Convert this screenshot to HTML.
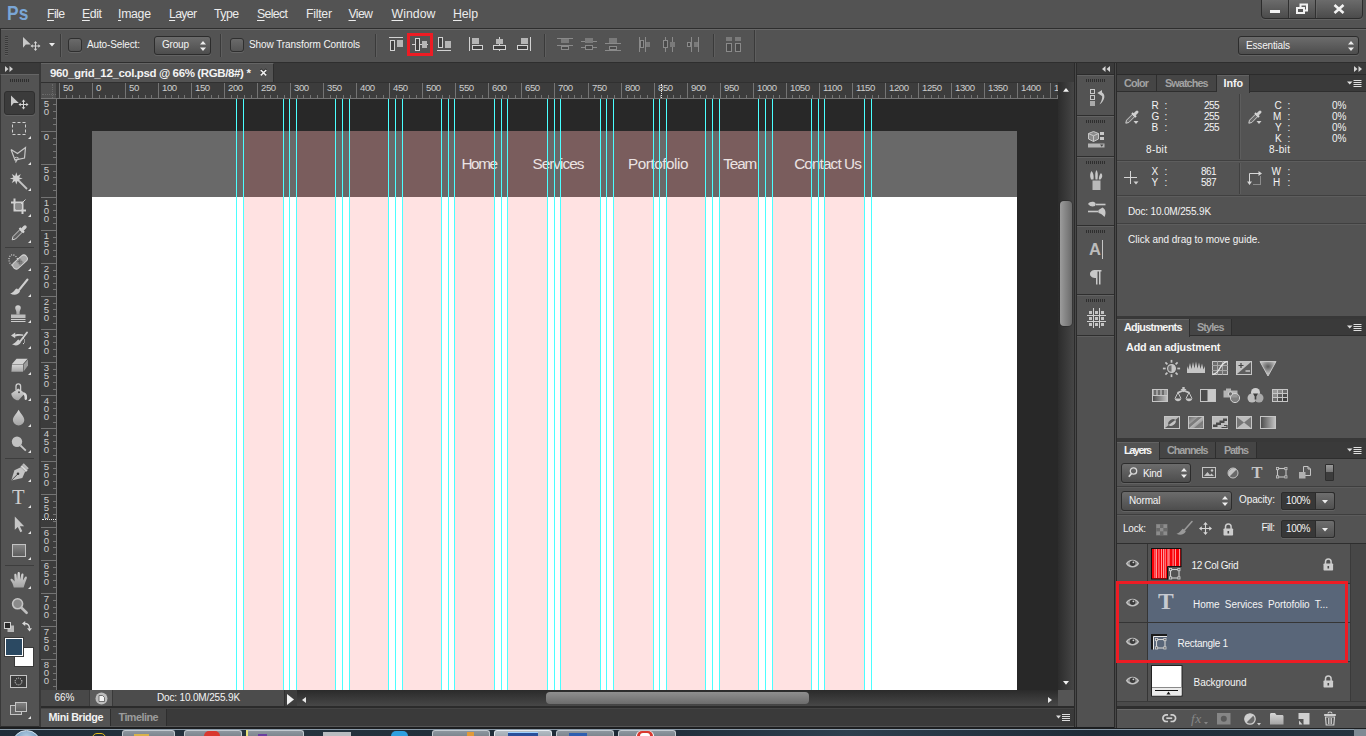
<!DOCTYPE html>
<html lang="en"><head><meta charset="utf-8"><title>960_grid_12_col.psd @ 66% (RGB/8#) *</title>
<style>
*{box-sizing:border-box;margin:0;padding:0}
html,body{width:1366px;height:736px;overflow:hidden;background:#535353}
body{position:relative;font-family:"Liberation Sans",sans-serif;font-size:11px;color:#e6e6e6;-webkit-font-smoothing:antialiased}
.a{position:absolute}
.t{position:absolute;white-space:nowrap;line-height:14px}
svg{position:absolute;overflow:visible}
u{text-decoration:underline;text-underline-offset:2px;text-decoration-thickness:1px}
/* frames */
#menubar{left:0;top:0;width:1366px;height:28px;background:#535353}
#menubar .t{font-size:13px;top:7px;color:#ececec;letter-spacing:.1px}
#optbar{left:0;top:28px;width:1366px;height:35px;background:#535353;border-top:1px solid #2e2e2e;border-bottom:1px solid #2e2e2e;border-left:1px solid #2e2e2e;box-shadow:inset 0 1px 0 #686868}
#tabrow{left:41px;top:63px;width:1034px;height:19px;background:#3a3a3a}
#tab{left:41px;top:63px;width:233px;height:19px;background:#535353;border-right:1px solid #2e2e2e;border-top:1px solid #656565}
#toolhead{left:0;top:63px;width:39px;height:11px;background:#3a3a3a}
#toolbar{left:0;top:74px;width:39px;height:653px;background:#535353;border-top:1px solid #656565;border-left:1px solid #383838;border-bottom:1px solid #2e2e2e}
#gapL{left:39px;top:63px;width:2px;height:664px;background:#383838}
#pasteboard{left:57px;top:99px;width:1001px;height:591px;background:#282828;overflow:hidden}
#hruler{left:41px;top:82px;width:1017px;height:17px;background:#3c3c3c;overflow:hidden;border-top:1px solid #303030}
#vruler{left:41px;top:99px;width:16px;height:591px;background:#3c3c3c;overflow:hidden}
#corner{left:41px;top:83px;width:15px;height:15px;background:#505050}
.rt{position:absolute;font-size:9.6px;color:#cdcdcd;line-height:9.6px;white-space:nowrap;letter-spacing:-.42px}
.g{position:absolute;top:0;width:1px;height:591px;background:#4affff}
.col{position:absolute;top:32px;height:559px;background:rgba(255,0,0,.113)}
</style></head><body>
<div class="a" id="menubar">
<span class="t" style="left:7.0px;top:3.7px;font-size:19.8px;line-height:1;color:#7aa6d6;font-weight:bold;transform:scaleX(.88);transform-origin:0 0;">Ps</span>
<span class="t" style="left:47.0px;top:7.6px;font-size:12.3px;line-height:1;letter-spacing:-0.61px;color:#ececec;"><u>F</u>ile</span>
<span class="t" style="left:82.0px;top:7.6px;font-size:12.3px;line-height:1;letter-spacing:-0.40px;color:#ececec;"><u>E</u>dit</span>
<span class="t" style="left:118.0px;top:7.6px;font-size:12.3px;line-height:1;letter-spacing:-0.30px;color:#ececec;"><u>I</u>mage</span>
<span class="t" style="left:169.0px;top:7.6px;font-size:12.3px;line-height:1;letter-spacing:-0.69px;color:#ececec;"><u>L</u>ayer</span>
<span class="t" style="left:214.0px;top:7.6px;font-size:12.3px;line-height:1;letter-spacing:-0.56px;color:#ececec;">T<u>y</u>pe</span>
<span class="t" style="left:257.0px;top:7.6px;font-size:12.3px;line-height:1;letter-spacing:-0.64px;color:#ececec;"><u>S</u>elect</span>
<span class="t" style="left:306.0px;top:7.6px;font-size:12.3px;line-height:1;letter-spacing:-0.27px;color:#ececec;">Fil<u>t</u>er</span>
<span class="t" style="left:348.5px;top:7.6px;font-size:12.3px;line-height:1;letter-spacing:-0.65px;color:#ececec;"><u>V</u>iew</span>
<span class="t" style="left:391.5px;top:7.6px;font-size:12.3px;line-height:1;letter-spacing:0.05px;color:#ececec;"><u>W</u>indow</span>
<span class="t" style="left:453.0px;top:7.6px;font-size:12.3px;line-height:1;letter-spacing:-0.10px;color:#ececec;"><u>H</u>elp</span>
<div class="a" style="left:1261px;top:-1px;width:102px;height:20px;border:1px solid #2c2c2c;border-radius:0 0 4px 4px;background:linear-gradient(#6b6b6b,#4b4b4b);box-shadow:0 1px 0 #626262"></div>
<i class="a" style="left:1288px;top:0;width:1px;height:18px;background:#303030"></i><i class="a" style="left:1289px;top:0;width:1px;height:18px;background:#707070;opacity:.5"></i>
<i class="a" style="left:1315px;top:0;width:1px;height:18px;background:#303030"></i><i class="a" style="left:1316px;top:0;width:1px;height:18px;background:#707070;opacity:.5"></i>
<i class="a" style="left:1270px;top:10px;width:10px;height:3px;background:#f2f2f2"></i>
<svg style="left:1296px;top:3px" width="13" height="11"><path d="M4.5 4V1.5H11V7.5H8.5" fill="none" stroke="#f2f2f2" stroke-width="2"/><rect x="1" y="5" width="7" height="5" fill="none" stroke="#f2f2f2" stroke-width="2"/></svg>
<svg style="left:1333px;top:4px" width="12" height="10"><path d="M1.5 1L10.5 9M10.5 1L1.5 9" stroke="#f2f2f2" stroke-width="2.6" fill="none"/></svg>
</div>
<div class="a" id="optbar"></div>
<i class="a" style="left:5px;top:36px;width:3px;height:20px;background:repeating-linear-gradient(#3a3a3a 0 1px,#5c5c5c 1px 2px)"></i>
<svg style="left:22.800px;top:36.900px" width="20" height="18"><path d="M0 0L0 10.8L2.800 7.600H7.800Z" fill="#c9c9c9"/><path d="M12.500 5.500V12.500M9 9H16" stroke="#d4d4d4" stroke-width="1" fill="none"/><path d="M12.500 4L14.300 6.200H10.700ZM12.500 14L14.300 11.800H10.700ZM7.500 9L9.700 7.200V10.800ZM17.500 9L15.300 7.200V10.800Z" fill="#d4d4d4"/></svg>
<svg style="left:48.500px;top:43.300px" width="6" height="4"><path d="M0 0H6L3 3.600Z" fill="#ececec"/></svg>
<i class="a" style="left:60px;top:34px;width:1px;height:23px;background:#3a3a3a"></i><i class="a" style="left:61px;top:34px;width:1px;height:23px;background:#5e5e5e"></i>
<div class="a" style="left:68px;top:38px;width:14px;height:14px;border:1px solid #2f2f2f;border-radius:3px;background:linear-gradient(#6a6a6a,#555);box-shadow:0 1px 0 #666"></div>
<span class="t" style="left:87.0px;top:39.5px;font-size:10px;line-height:1;letter-spacing:-0.13px;color:#f4f4f4;">Auto-Select:</span>
<div class="a" style="left:154px;top:36px;width:57px;height:19px;border:1px solid #2c2c2c;border-radius:3px;background:linear-gradient(#6c6c6c,#4d4d4d);box-shadow:0 1px 0 #636363"></div><svg style="left:200px;top:41px" width="6" height="10"><path d="M0 3.5L3 0L6 3.5ZM0 6.5L3 10L6 6.5Z" fill="#ededed"/></svg>
<span class="t" style="left:162.0px;top:39.5px;font-size:10px;line-height:1;letter-spacing:-0.20px;color:#f4f4f4;">Group</span>
<i class="a" style="left:220px;top:34px;width:1px;height:23px;background:#3a3a3a"></i><i class="a" style="left:221px;top:34px;width:1px;height:23px;background:#5e5e5e"></i>
<div class="a" style="left:230px;top:38px;width:14px;height:14px;border:1px solid #2f2f2f;border-radius:3px;background:linear-gradient(#6a6a6a,#555);box-shadow:0 1px 0 #666"></div>
<span class="t" style="left:249.0px;top:39.5px;font-size:10px;line-height:1;letter-spacing:-0.08px;color:#f4f4f4;">Show Transform Controls</span>
<i class="a" style="left:375px;top:34px;width:1px;height:23px;background:#3a3a3a"></i><i class="a" style="left:376px;top:34px;width:1px;height:23px;background:#5e5e5e"></i>
<svg style="left:389px;top:37px" width="14" height="14"><rect x="0" y="0" width="14" height="1" fill="#d2d2d2"/><rect x="1.5" y="3.5" width="4" height="10" fill="#404040" stroke="#d2d2d2"/><rect x="8" y="3" width="6" height="7" fill="#b5b5b5"/></svg>
<div class="a" style="left:407px;top:33px;width:26px;height:23px;border:3px solid #ed1c24"></div>
<svg style="left:412px;top:38px" width="16" height="13"><rect x="0" y="6" width="16" height="1" fill="#d2d2d2"/><rect x="3.5" y="0.5" width="4" height="12" fill="#404040" stroke="#d2d2d2"/><rect x="10" y="3" width="5" height="7" fill="#b5b5b5"/></svg>
<svg style="left:437px;top:37px" width="14" height="14"><rect x="0" y="13" width="14" height="1" fill="#d2d2d2"/><rect x="1.5" y="0.5" width="4" height="10" fill="#404040" stroke="#d2d2d2"/><rect x="8" y="4" width="6" height="7" fill="#b5b5b5"/></svg>
<svg style="left:469px;top:37px" width="14" height="14"><rect x="0" y="0" width="1" height="14" fill="#d2d2d2"/><rect x="3.5" y="8.5" width="10" height="4" fill="#404040" stroke="#d2d2d2"/><rect x="3" y="1" width="7" height="6" fill="#b5b5b5"/></svg>
<svg style="left:493px;top:37px" width="13" height="14"><rect x="6" y="0" width="1" height="14" fill="#d2d2d2"/><rect x="0.5" y="8.5" width="12" height="4" fill="#404040" stroke="#d2d2d2"/><rect x="3" y="2" width="7" height="5" fill="#b5b5b5"/></svg>
<svg style="left:517px;top:37px" width="14" height="14"><rect x="13" y="0" width="1" height="14" fill="#d2d2d2"/><rect x="0.5" y="8.5" width="10" height="4" fill="#404040" stroke="#d2d2d2"/><rect x="4" y="1" width="7" height="6" fill="#b5b5b5"/></svg>
<i class="a" style="left:544px;top:34px;width:1px;height:23px;background:#3a3a3a"></i><i class="a" style="left:545px;top:34px;width:1px;height:23px;background:#5e5e5e"></i>
<svg style="left:557px;top:38px" width="16" height="13"><rect x="0" y="0" width="16" height="1" fill="#8a8a8a"/><rect x="4" y="1" width="8" height="4" fill="#7a7a7a"/><rect x="0" y="7" width="16" height="1" fill="#8a8a8a"/><rect x="4.5" y="8.5" width="7" height="3" fill="#494949" stroke="#8a8a8a"/></svg>
<svg style="left:581px;top:38px" width="16" height="13"><rect x="0" y="3" width="16" height="1" fill="#8a8a8a"/><rect x="4" y="0" width="8" height="5" fill="#7a7a7a"/><rect x="0" y="9" width="16" height="1" fill="#8a8a8a"/><rect x="4.5" y="7.5" width="7" height="4" fill="#494949" stroke="#8a8a8a"/></svg>
<svg style="left:605px;top:38px" width="16" height="13"><rect x="0" y="5" width="16" height="1" fill="#8a8a8a"/><rect x="4" y="0" width="8" height="5" fill="#7a7a7a"/><rect x="0" y="12" width="16" height="1" fill="#8a8a8a"/><rect x="4.5" y="8.5" width="7" height="3" fill="#494949" stroke="#8a8a8a"/></svg>
<svg style="left:639px;top:37px" width="12" height="15"><rect x="0" y="0" width="1" height="15" fill="#8a8a8a"/><rect x="1.5" y="3.5" width="3" height="7" fill="#494949" stroke="#8a8a8a"/><rect x="6" y="0" width="1" height="15" fill="#8a8a8a"/><rect x="7" y="5" width="4" height="5" fill="#7a7a7a"/></svg>
<svg style="left:663px;top:37px" width="12" height="15"><rect x="2" y="0" width="1" height="15" fill="#8a8a8a"/><rect x="0.5" y="3.5" width="4" height="7" fill="#494949" stroke="#8a8a8a"/><rect x="9" y="0" width="1" height="15" fill="#8a8a8a"/><rect x="7" y="5" width="5" height="5" fill="#7a7a7a"/></svg>
<svg style="left:687px;top:37px" width="12" height="15"><rect x="4" y="0" width="1" height="15" fill="#8a8a8a"/><rect x="0.5" y="5.5" width="3" height="4" fill="#494949" stroke="#8a8a8a"/><rect x="11" y="0" width="1" height="15" fill="#8a8a8a"/><rect x="7" y="5" width="4" height="5" fill="#7a7a7a"/></svg>
<i class="a" style="left:713px;top:34px;width:1px;height:23px;background:#3a3a3a"></i><i class="a" style="left:714px;top:34px;width:1px;height:23px;background:#5e5e5e"></i>
<svg style="left:726px;top:37px" width="15" height="15"><rect x="0" y="0" width="6" height="4" fill="#7a7a7a"/><rect x="9" y="0" width="6" height="4" fill="#7a7a7a"/><rect x="0.5" y="6.5" width="5" height="8" fill="#494949" stroke="#8a8a8a"/><rect x="9.5" y="6.5" width="5" height="8" fill="#494949" stroke="#8a8a8a"/></svg>
<i class="a" style="left:754px;top:30px;width:1px;height:32px;background:#3a3a3a"></i><i class="a" style="left:755px;top:30px;width:1px;height:32px;background:#5e5e5e"></i>
<div class="a" style="left:1238px;top:36px;width:121px;height:19px;border:1px solid #2c2c2c;border-radius:3px;background:linear-gradient(#6c6c6c,#4d4d4d);box-shadow:0 1px 0 #636363"></div><svg style="left:1348px;top:41px" width="6" height="10"><path d="M0 3.5L3 0L6 3.5ZM0 6.5L3 10L6 6.5Z" fill="#ededed"/></svg>
<span class="t" style="left:1246.0px;top:40.5px;font-size:10px;line-height:1;letter-spacing:-0.18px;color:#f4f4f4;">Essentials</span>
<div class="a" id="toolhead"></div>
<svg style="left:5px;top:65.500px" width="9" height="6"><path d="M0 0L3.5 3L0 6ZM4.5 0L8 3L4.5 6Z" fill="#cfcfcf"/></svg>
<div class="a" id="toolbar"></div><div class="a" id="gapL"></div>
<i class="a" style="left:10px;top:79px;width:20px;height:3px;background:repeating-linear-gradient(90deg,#2e2e2e 0 1px,transparent 1px 2px)"></i>
<div class="a" style="left:4px;top:91px;width:31px;height:24px;border:1px solid #2f2f2f;border-radius:3px;background:#3b3b3b;box-shadow:0 1px 0 #626262"></div>
<svg style="left:0;top:0" width="40" height="736">
<defs><linearGradient id="gv" x1="0" y1="0" x2="0" y2="1"><stop offset="0" stop-color="#d6d6d6"/><stop offset="1" stop-color="#a4a4a4"/></linearGradient><linearGradient id="gr" x1="0" y1="0" x2="0" y2="1"><stop offset="0" stop-color="#858585"/><stop offset="1" stop-color="#5c5c5c"/></linearGradient></defs>
<g transform="translate(11,95.5)"><path d="M0 0L0 10.8L2.8 7.6H7.8Z" fill="#c9c9c9"/><path d="M12.5 5.5V12.5M9 9H16" stroke="#d4d4d4" stroke-width="1" fill="none"/><path d="M12.5 4L14.3 6.2H10.7ZM12.5 14L14.3 11.8H10.7ZM7.5 9L9.7 7.2V10.8ZM17.5 9L15.3 7.2V10.8Z" fill="#d4d4d4"/></g>
<rect x="12.5" y="122.5" width="13" height="12" fill="none" stroke="#d0d0d0" stroke-width="1" stroke-dasharray="3 2"/><path d="M28 139H31V136Z" fill="#e4e4e4"/>
<path d="M11 149.5L17.5 153.5L25.5 147.5L24.5 158L15 160L11 149.5M17.5 158.5L15.5 162.5" fill="none" stroke="#c8c8c8" stroke-width="1.2"/><ellipse cx="16.6" cy="158.6" rx="2.1" ry="1.3" fill="none" stroke="#c8c8c8" stroke-width=".9"/><path d="M28 165H31V162Z" fill="#e4e4e4"/>
<path d="M16.3 172.3L17.5 176L20.8 174L19.2 177.4L22.8 178.4L19.2 179.6L20.8 183L17.5 181L16.3 184.6L15.1 181L11.8 183L13.4 179.6L9.8 178.4L13.4 177.4L11.8 174L15.1 176Z" fill="#d2d2d2"/><path d="M19 181L27 189" stroke="#c4c4c4" stroke-width="1.8"/><path d="M28 191H31V188Z" fill="#e4e4e4"/>
<path d="M14.5 198.5V210.5H26M11 202.5H22.5V214" fill="none" stroke="#d0d0d0" stroke-width="2"/><path d="M15.5 209.5L25.5 199.5" stroke="#d0d0d0" stroke-width="1"/><rect x="16" y="204" width="5" height="5" fill="#8a8a8a"/><path d="M28 217H31V214Z" fill="#e4e4e4"/>
<path d="M12.2 239.8L13 236.5L20 229.5L22.5 232L15.5 239Z" fill="#606060" stroke="#d0d0d0" stroke-width="1"/><path d="M19.5 228L24 232.5" stroke="#d8d8d8" stroke-width="2.2"/><path d="M22 230L25 227" stroke="#cfcfcf" stroke-width="3.4" stroke-linecap="round"/><path d="M28 243H31V240Z" fill="#e4e4e4"/>
<path d="M5 247.5H34" stroke="#3d3d3d" stroke-width="1"/>
<ellipse cx="13.5" cy="260.5" rx="4.3" ry="5.8" fill="none" stroke="#e0e0e0" stroke-width="1.2" stroke-dasharray="1 1.3" transform="rotate(-20 13.5 260.5)"/><g transform="rotate(-42 20 262)"><rect x="11.5" y="258.5" width="17" height="7" rx="3.3" fill="#a8a8a8" stroke="#d4d4d4" stroke-width="1"/><rect x="17.5" y="259" width="5" height="6" fill="#8c8c8c"/><path d="M18.5 260.5h1M20.5 260.5h1M18.5 262.5h1M20.5 262.5h1M19.5 261.5h1M19.5 263.5h1" stroke="#5a5a5a" stroke-width="1"/></g><path d="M28 271H31V268Z" fill="#e4e4e4"/>
<path d="M27.5 279.5L19 290" stroke="#cfcfcf" stroke-width="2" stroke-linecap="round"/><path d="M17 288.5C14.5 289 14.5 292.5 10.2 293.4C13.5 295.6 18.6 295 20 291.2Z" fill="#cfcfcf"/><path d="M28 297H31V294Z" fill="#e4e4e4"/>
<path d="M18 305.2a2.8 2.8 0 0 1 2.8 2.8c0 1.6-1.2 2.4-1.2 4.2v2.3h-3.2v-2.3c0-1.8-1.2-2.6-1.2-4.2a2.8 2.8 0 0 1 2.8-2.8Z" fill="url(#gv)"/><rect x="11" y="314.5" width="14.5" height="3.6" fill="#bdbdbd"/><path d="M11 319.5H25.5M11 321.5H25.5" stroke="#cdcdcd" stroke-width="1"/><path d="M28 323H31V320Z" fill="#e4e4e4"/>
<path d="M27 332.5L20.5 341" stroke="#cfcfcf" stroke-width="1.9" stroke-linecap="round"/><path d="M18.6 339.5C16.6 340 16.4 343 12 344.3C15 346.2 19.6 345.8 21 342Z" fill="#cfcfcf"/><path d="M11 335.5L15.2 332.6V334.4C18.5 333.8 21.5 334 23.5 334.6L22.6 336.1C20.5 335.7 18 335.7 15.2 336.4V338.3Z" fill="#cfcfcf"/><path d="M23 338l1 0m0 2l1 0m-1 2l1 0m-2 1.600l1 0" stroke="#e6e6e6" stroke-width="1"/><path d="M28 349H31V346Z" fill="#e4e4e4"/>
<path d="M16.5 358.8H27.6L23 364H12Z" fill="#d2d2d2"/><path d="M12 364.6H23V371.8H11.4Z" fill="url(#gv)"/><path d="M23.6 364.4L28 359.4V365.6L23.6 371.6Z" fill="#9c9c9c"/><path d="M28 375H31V372Z" fill="#e4e4e4"/>
<path d="M11.3 393.5L18.2 388.4L25 393.2L18.5 400.2C16.5 401 11.5 398.200 11.3 393.5Z" fill="url(#gv)"/><path d="M16 390V386.200a2.300 2.300 0 0 1 4.600 0V391.500" fill="none" stroke="#d0d0d0" stroke-width="1.3"/><path d="M24 392.600C26.500 393.200 27.400 395 27 399C26.500 400.300 24.800 400.300 24.600 399C24.600 397 24.600 395 23 394Z" fill="#d8d8d8"/><circle cx="19" cy="392.300" r="1" fill="#555"/><path d="M28 401H31V398Z" fill="#e4e4e4"/>
<path d="M18.600 409.800C20.500 413.500 24.300 416.500 24.300 420A5.700 5.400 0 0 1 12.900 420C12.900 416.500 16.700 413.500 18.600 409.800Z" fill="url(#gv)"/><path d="M28 427H31V424Z" fill="#e4e4e4"/>
<circle cx="17" cy="441.800" r="5.200" fill="#c2c2c2"/><path d="M20.500 445.500L25.800 450.600" stroke="#c8c8c8" stroke-width="1.800"/><path d="M28 453H31V450Z" fill="#e4e4e4"/>
<path d="M5 458.5H34" stroke="#3d3d3d" stroke-width="1"/>
<path d="M11.300 480.500L14.400 470.300L20.800 467.200L25.200 471.600L22.300 478Z" fill="#c4c4c4"/><path d="M11.300 480.500L17.600 474.200" stroke="#4a4a4a" stroke-width="1"/><circle cx="18" cy="473.800" r="1.300" fill="#3a3a3a"/><path d="M21.300 465.800L26.800 471.200" stroke="#d6d6d6" stroke-width="2.400"/><path d="M23 464L28 469" stroke="#bdbdbd" stroke-width="2.200"/><path d="M28 482H31V479Z" fill="#e4e4e4"/>
<path d="M28 508H31V505Z" fill="#e4e4e4"/>
<path d="M14.800 516.600V529.800L17.800 527L20.300 532.300L22.300 531.300L19.900 526.200H24.200Z" fill="#c6c6c6"/><path d="M28 534H31V531Z" fill="#e4e4e4"/>
<rect x="12.500" y="544.500" width="13" height="12" fill="url(#gr)" stroke="#c2c2c2" stroke-width="1"/><path d="M28 560H31V557Z" fill="#e4e4e4"/>
<path d="M5 565.5H34" stroke="#3d3d3d" stroke-width="1"/>
<path d="M13.800 587.600C13 584 12 582 10.600 580.200C10.200 578.800 11.800 578.300 12.900 579.500L14.600 581.500L14.300 574.800C14.300 573.300 16.300 573.300 16.500 574.800L17.100 579.500L17.600 573.200C17.700 571.700 19.800 571.700 19.900 573.200L20.100 579.600L21.300 574.400C21.600 573 23.600 573.300 23.500 574.800L22.900 580.600L24.800 577.200C25.500 576 27.300 576.700 26.800 578.200C25.800 581.500 24.500 584 23.600 587.600Z" fill="url(#gv)"/><path d="M28 589H31V586Z" fill="#e4e4e4"/>
<circle cx="17.600" cy="603.800" r="5" fill="#8b8b8b" stroke="#c6c6c6" stroke-width="1.600"/><path d="M21.500 607.800L26.600 612.800" stroke="#c0c0c0" stroke-width="2.600" stroke-linecap="round"/>
<rect x="7.500" y="625.500" width="6.500" height="6.500" fill="#b8b8b8"/><rect x="4.500" y="622.500" width="6" height="6" fill="#2a2a2a" stroke="#d0d0d0" stroke-width="1"/>
<path d="M24.500 623.500C28 623.500 29.500 625 29.500 628.500" fill="none" stroke="#d8d8d8" stroke-width="1.300"/><path d="M22 623.500L25.200 621V626ZM29.500 631.500L27 628.200H32Z" fill="#d8d8d8"/>
<rect x="14.500" y="647.500" width="19" height="19" fill="#fff" stroke="#3a3a3a"/>
<rect x="4.500" y="637.500" width="19" height="19" fill="#fff" stroke="#3a3a3a"/><rect x="6" y="639" width="16" height="16" fill="#2b4962"/>
<rect x="10.500" y="675.500" width="16" height="12" fill="#3c3c3c" stroke="#c4c4c4"/><circle cx="18.500" cy="681.500" r="3.400" fill="none" stroke="#f0f0f0" stroke-width="1" stroke-dasharray="1 1.140"/>
<rect x="10.500" y="705.500" width="11" height="9" fill="#666" stroke="#c4c4c4"/><rect x="15.500" y="702.500" width="11" height="9" fill="url(#gr)" stroke="#c4c4c4"/><path d="M28 719H31V716Z" fill="#e4e4e4"/>
</svg>
<span class="t" style="left:12px;top:487px;font-family:'Liberation Serif',serif;font-size:21px;line-height:21px;color:#cecece;transform:scaleX(.98);transform-origin:0 0">T</span>
<div class="a" id="tabrow"></div><div class="a" id="tab"><span class="t" style="left:9.0px;top:3.9px;font-size:11.5px;line-height:1;letter-spacing:-0.37px;color:#f2f2f2;font-weight:bold;">960_grid_12_col.psd @ 66% (RGB/8#) *</span><svg style="left:218.500px;top:4.500px" width="8" height="8"><path d="M.8 0L6.200 5.400M6.200 0L.8 5.400" stroke="#1e1e1e" stroke-width="1.500" fill="none"/><path d="M.8 1L6.200 6.400M6.200 1L.8 6.400" stroke="#efefef" stroke-width="1.500" fill="none"/></svg></div>
<div class="a" id="pasteboard">
<div class="a" style="left:35px;top:32px;width:925px;height:559px;background:#fff"></div>
<div class="a" style="left:35px;top:32px;width:925px;height:66px;background:#696969"></div>
<div class="col" style="left:186px;width:40px"></div>
<div class="col" style="left:239px;width:39px"></div>
<div class="col" style="left:292px;width:39px"></div>
<div class="col" style="left:345px;width:39px"></div>
<div class="col" style="left:397px;width:40px"></div>
<div class="col" style="left:450px;width:40px"></div>
<div class="col" style="left:503px;width:40px"></div>
<div class="col" style="left:556px;width:40px"></div>
<div class="col" style="left:609px;width:39px"></div>
<div class="col" style="left:662px;width:39px"></div>
<div class="col" style="left:715px;width:39px"></div>
<div class="col" style="left:767px;width:40px"></div>
<span class="t" style="left:404.5px;top:56.9px;font-size:15.3px;line-height:1;letter-spacing:-1.44px;color:#ebe3e3;">Home</span>
<span class="t" style="left:475.4px;top:56.9px;font-size:15.3px;line-height:1;letter-spacing:-0.95px;color:#ebe3e3;">Services</span>
<span class="t" style="left:571.0px;top:56.9px;font-size:15.3px;line-height:1;letter-spacing:-0.47px;color:#ebe3e3;">Portofolio</span>
<span class="t" style="left:666.2px;top:56.9px;font-size:15.3px;line-height:1;letter-spacing:-1.10px;color:#ebe3e3;">Team</span>
<span class="t" style="left:737.2px;top:56.9px;font-size:15.3px;line-height:1;letter-spacing:-0.88px;color:#ebe3e3;">Contact Us</span>
<i class="g" style="left:179px"></i>
<i class="g" style="left:186px"></i>
<i class="g" style="left:226px"></i>
<i class="g" style="left:232px"></i>
<i class="g" style="left:239px"></i>
<i class="g" style="left:278px"></i>
<i class="g" style="left:285px"></i>
<i class="g" style="left:292px"></i>
<i class="g" style="left:331px"></i>
<i class="g" style="left:338px"></i>
<i class="g" style="left:345px"></i>
<i class="g" style="left:384px"></i>
<i class="g" style="left:391px"></i>
<i class="g" style="left:397px"></i>
<i class="g" style="left:437px"></i>
<i class="g" style="left:444px"></i>
<i class="g" style="left:450px"></i>
<i class="g" style="left:490px"></i>
<i class="g" style="left:497px"></i>
<i class="g" style="left:503px"></i>
<i class="g" style="left:543px"></i>
<i class="g" style="left:549px"></i>
<i class="g" style="left:556px"></i>
<i class="g" style="left:596px"></i>
<i class="g" style="left:602px"></i>
<i class="g" style="left:609px"></i>
<i class="g" style="left:648px"></i>
<i class="g" style="left:655px"></i>
<i class="g" style="left:662px"></i>
<i class="g" style="left:701px"></i>
<i class="g" style="left:708px"></i>
<i class="g" style="left:715px"></i>
<i class="g" style="left:754px"></i>
<i class="g" style="left:761px"></i>
<i class="g" style="left:767px"></i>
<i class="g" style="left:807px"></i>
<i class="g" style="left:814px"></i>
</div>
<div class="a" id="hruler">
<span class="rt" style="left:22px;top:-.1px">50</span>
<span class="rt" style="left:55px;top:-.1px">0</span>
<span class="rt" style="left:88px;top:-.1px">50</span>
<span class="rt" style="left:121px;top:-.1px">100</span>
<span class="rt" style="left:154px;top:-.1px">150</span>
<span class="rt" style="left:187px;top:-.1px">200</span>
<span class="rt" style="left:220px;top:-.1px">250</span>
<span class="rt" style="left:253px;top:-.1px">300</span>
<span class="rt" style="left:286px;top:-.1px">350</span>
<span class="rt" style="left:319px;top:-.1px">400</span>
<span class="rt" style="left:352px;top:-.1px">450</span>
<span class="rt" style="left:385px;top:-.1px">500</span>
<span class="rt" style="left:418px;top:-.1px">550</span>
<span class="rt" style="left:451px;top:-.1px">600</span>
<span class="rt" style="left:484px;top:-.1px">650</span>
<span class="rt" style="left:517px;top:-.1px">700</span>
<span class="rt" style="left:551px;top:-.1px">750</span>
<span class="rt" style="left:584px;top:-.1px">800</span>
<span class="rt" style="left:617px;top:-.1px">850</span>
<span class="rt" style="left:650px;top:-.1px">900</span>
<span class="rt" style="left:683px;top:-.1px">950</span>
<span class="rt" style="left:716px;top:-.1px">1000</span>
<span class="rt" style="left:749px;top:-.1px">1050</span>
<span class="rt" style="left:782px;top:-.1px">1100</span>
<span class="rt" style="left:815px;top:-.1px">1150</span>
<span class="rt" style="left:848px;top:-.1px">1200</span>
<span class="rt" style="left:881px;top:-.1px">1250</span>
<span class="rt" style="left:914px;top:-.1px">1300</span>
<span class="rt" style="left:947px;top:-.1px">1350</span>
<span class="rt" style="left:980px;top:-.1px">1400</span>
<span class="rt" style="left:1013px;top:-.1px">1450</span>
<i class="a" style="left:18px;top:0;width:1px;height:15px;background:#747474"></i>
<i class="a" style="left:25px;top:12px;width:1px;height:3px;background:#747474"></i>
<i class="a" style="left:31px;top:12px;width:1px;height:3px;background:#747474"></i>
<i class="a" style="left:38px;top:12px;width:1px;height:3px;background:#747474"></i>
<i class="a" style="left:44px;top:12px;width:1px;height:3px;background:#747474"></i>
<i class="a" style="left:51px;top:0;width:1px;height:15px;background:#747474"></i>
<i class="a" style="left:58px;top:12px;width:1px;height:3px;background:#747474"></i>
<i class="a" style="left:64px;top:12px;width:1px;height:3px;background:#747474"></i>
<i class="a" style="left:71px;top:12px;width:1px;height:3px;background:#747474"></i>
<i class="a" style="left:77px;top:12px;width:1px;height:3px;background:#747474"></i>
<i class="a" style="left:84px;top:0;width:1px;height:15px;background:#747474"></i>
<i class="a" style="left:91px;top:12px;width:1px;height:3px;background:#747474"></i>
<i class="a" style="left:97px;top:12px;width:1px;height:3px;background:#747474"></i>
<i class="a" style="left:104px;top:12px;width:1px;height:3px;background:#747474"></i>
<i class="a" style="left:110px;top:12px;width:1px;height:3px;background:#747474"></i>
<i class="a" style="left:117px;top:0;width:1px;height:15px;background:#747474"></i>
<i class="a" style="left:124px;top:12px;width:1px;height:3px;background:#747474"></i>
<i class="a" style="left:130px;top:12px;width:1px;height:3px;background:#747474"></i>
<i class="a" style="left:137px;top:12px;width:1px;height:3px;background:#747474"></i>
<i class="a" style="left:143px;top:12px;width:1px;height:3px;background:#747474"></i>
<i class="a" style="left:150px;top:0;width:1px;height:15px;background:#747474"></i>
<i class="a" style="left:157px;top:12px;width:1px;height:3px;background:#747474"></i>
<i class="a" style="left:163px;top:12px;width:1px;height:3px;background:#747474"></i>
<i class="a" style="left:170px;top:12px;width:1px;height:3px;background:#747474"></i>
<i class="a" style="left:177px;top:12px;width:1px;height:3px;background:#747474"></i>
<i class="a" style="left:183px;top:0;width:1px;height:15px;background:#747474"></i>
<i class="a" style="left:190px;top:12px;width:1px;height:3px;background:#747474"></i>
<i class="a" style="left:196px;top:12px;width:1px;height:3px;background:#747474"></i>
<i class="a" style="left:203px;top:12px;width:1px;height:3px;background:#747474"></i>
<i class="a" style="left:210px;top:12px;width:1px;height:3px;background:#747474"></i>
<i class="a" style="left:216px;top:0;width:1px;height:15px;background:#747474"></i>
<i class="a" style="left:223px;top:12px;width:1px;height:3px;background:#747474"></i>
<i class="a" style="left:229px;top:12px;width:1px;height:3px;background:#747474"></i>
<i class="a" style="left:236px;top:12px;width:1px;height:3px;background:#747474"></i>
<i class="a" style="left:243px;top:12px;width:1px;height:3px;background:#747474"></i>
<i class="a" style="left:249px;top:0;width:1px;height:15px;background:#747474"></i>
<i class="a" style="left:256px;top:12px;width:1px;height:3px;background:#747474"></i>
<i class="a" style="left:262px;top:12px;width:1px;height:3px;background:#747474"></i>
<i class="a" style="left:269px;top:12px;width:1px;height:3px;background:#747474"></i>
<i class="a" style="left:276px;top:12px;width:1px;height:3px;background:#747474"></i>
<i class="a" style="left:282px;top:0;width:1px;height:15px;background:#747474"></i>
<i class="a" style="left:289px;top:12px;width:1px;height:3px;background:#747474"></i>
<i class="a" style="left:295px;top:12px;width:1px;height:3px;background:#747474"></i>
<i class="a" style="left:302px;top:12px;width:1px;height:3px;background:#747474"></i>
<i class="a" style="left:309px;top:12px;width:1px;height:3px;background:#747474"></i>
<i class="a" style="left:315px;top:0;width:1px;height:15px;background:#747474"></i>
<i class="a" style="left:322px;top:12px;width:1px;height:3px;background:#747474"></i>
<i class="a" style="left:328px;top:12px;width:1px;height:3px;background:#747474"></i>
<i class="a" style="left:335px;top:12px;width:1px;height:3px;background:#747474"></i>
<i class="a" style="left:342px;top:12px;width:1px;height:3px;background:#747474"></i>
<i class="a" style="left:348px;top:0;width:1px;height:15px;background:#747474"></i>
<i class="a" style="left:355px;top:12px;width:1px;height:3px;background:#747474"></i>
<i class="a" style="left:362px;top:12px;width:1px;height:3px;background:#747474"></i>
<i class="a" style="left:368px;top:12px;width:1px;height:3px;background:#747474"></i>
<i class="a" style="left:375px;top:12px;width:1px;height:3px;background:#747474"></i>
<i class="a" style="left:381px;top:0;width:1px;height:15px;background:#747474"></i>
<i class="a" style="left:388px;top:12px;width:1px;height:3px;background:#747474"></i>
<i class="a" style="left:395px;top:12px;width:1px;height:3px;background:#747474"></i>
<i class="a" style="left:401px;top:12px;width:1px;height:3px;background:#747474"></i>
<i class="a" style="left:408px;top:12px;width:1px;height:3px;background:#747474"></i>
<i class="a" style="left:414px;top:0;width:1px;height:15px;background:#747474"></i>
<i class="a" style="left:421px;top:12px;width:1px;height:3px;background:#747474"></i>
<i class="a" style="left:428px;top:12px;width:1px;height:3px;background:#747474"></i>
<i class="a" style="left:434px;top:12px;width:1px;height:3px;background:#747474"></i>
<i class="a" style="left:441px;top:12px;width:1px;height:3px;background:#747474"></i>
<i class="a" style="left:447px;top:0;width:1px;height:15px;background:#747474"></i>
<i class="a" style="left:454px;top:12px;width:1px;height:3px;background:#747474"></i>
<i class="a" style="left:461px;top:12px;width:1px;height:3px;background:#747474"></i>
<i class="a" style="left:467px;top:12px;width:1px;height:3px;background:#747474"></i>
<i class="a" style="left:474px;top:12px;width:1px;height:3px;background:#747474"></i>
<i class="a" style="left:480px;top:0;width:1px;height:15px;background:#747474"></i>
<i class="a" style="left:487px;top:12px;width:1px;height:3px;background:#747474"></i>
<i class="a" style="left:494px;top:12px;width:1px;height:3px;background:#747474"></i>
<i class="a" style="left:500px;top:12px;width:1px;height:3px;background:#747474"></i>
<i class="a" style="left:507px;top:12px;width:1px;height:3px;background:#747474"></i>
<i class="a" style="left:513px;top:0;width:1px;height:15px;background:#747474"></i>
<i class="a" style="left:520px;top:12px;width:1px;height:3px;background:#747474"></i>
<i class="a" style="left:527px;top:12px;width:1px;height:3px;background:#747474"></i>
<i class="a" style="left:533px;top:12px;width:1px;height:3px;background:#747474"></i>
<i class="a" style="left:540px;top:12px;width:1px;height:3px;background:#747474"></i>
<i class="a" style="left:547px;top:0;width:1px;height:15px;background:#747474"></i>
<i class="a" style="left:553px;top:12px;width:1px;height:3px;background:#747474"></i>
<i class="a" style="left:560px;top:12px;width:1px;height:3px;background:#747474"></i>
<i class="a" style="left:566px;top:12px;width:1px;height:3px;background:#747474"></i>
<i class="a" style="left:573px;top:12px;width:1px;height:3px;background:#747474"></i>
<i class="a" style="left:580px;top:0;width:1px;height:15px;background:#747474"></i>
<i class="a" style="left:586px;top:12px;width:1px;height:3px;background:#747474"></i>
<i class="a" style="left:593px;top:12px;width:1px;height:3px;background:#747474"></i>
<i class="a" style="left:599px;top:12px;width:1px;height:3px;background:#747474"></i>
<i class="a" style="left:606px;top:12px;width:1px;height:3px;background:#747474"></i>
<i class="a" style="left:613px;top:0;width:1px;height:15px;background:#747474"></i>
<i class="a" style="left:619px;top:12px;width:1px;height:3px;background:#747474"></i>
<i class="a" style="left:626px;top:12px;width:1px;height:3px;background:#747474"></i>
<i class="a" style="left:632px;top:12px;width:1px;height:3px;background:#747474"></i>
<i class="a" style="left:639px;top:12px;width:1px;height:3px;background:#747474"></i>
<i class="a" style="left:646px;top:0;width:1px;height:15px;background:#747474"></i>
<i class="a" style="left:652px;top:12px;width:1px;height:3px;background:#747474"></i>
<i class="a" style="left:659px;top:12px;width:1px;height:3px;background:#747474"></i>
<i class="a" style="left:665px;top:12px;width:1px;height:3px;background:#747474"></i>
<i class="a" style="left:672px;top:12px;width:1px;height:3px;background:#747474"></i>
<i class="a" style="left:679px;top:0;width:1px;height:15px;background:#747474"></i>
<i class="a" style="left:685px;top:12px;width:1px;height:3px;background:#747474"></i>
<i class="a" style="left:692px;top:12px;width:1px;height:3px;background:#747474"></i>
<i class="a" style="left:698px;top:12px;width:1px;height:3px;background:#747474"></i>
<i class="a" style="left:705px;top:12px;width:1px;height:3px;background:#747474"></i>
<i class="a" style="left:712px;top:0;width:1px;height:15px;background:#747474"></i>
<i class="a" style="left:718px;top:12px;width:1px;height:3px;background:#747474"></i>
<i class="a" style="left:725px;top:12px;width:1px;height:3px;background:#747474"></i>
<i class="a" style="left:732px;top:12px;width:1px;height:3px;background:#747474"></i>
<i class="a" style="left:738px;top:12px;width:1px;height:3px;background:#747474"></i>
<i class="a" style="left:745px;top:0;width:1px;height:15px;background:#747474"></i>
<i class="a" style="left:751px;top:12px;width:1px;height:3px;background:#747474"></i>
<i class="a" style="left:758px;top:12px;width:1px;height:3px;background:#747474"></i>
<i class="a" style="left:765px;top:12px;width:1px;height:3px;background:#747474"></i>
<i class="a" style="left:771px;top:12px;width:1px;height:3px;background:#747474"></i>
<i class="a" style="left:778px;top:0;width:1px;height:15px;background:#747474"></i>
<i class="a" style="left:784px;top:12px;width:1px;height:3px;background:#747474"></i>
<i class="a" style="left:791px;top:12px;width:1px;height:3px;background:#747474"></i>
<i class="a" style="left:798px;top:12px;width:1px;height:3px;background:#747474"></i>
<i class="a" style="left:804px;top:12px;width:1px;height:3px;background:#747474"></i>
<i class="a" style="left:811px;top:0;width:1px;height:15px;background:#747474"></i>
<i class="a" style="left:817px;top:12px;width:1px;height:3px;background:#747474"></i>
<i class="a" style="left:824px;top:12px;width:1px;height:3px;background:#747474"></i>
<i class="a" style="left:831px;top:12px;width:1px;height:3px;background:#747474"></i>
<i class="a" style="left:837px;top:12px;width:1px;height:3px;background:#747474"></i>
<i class="a" style="left:844px;top:0;width:1px;height:15px;background:#747474"></i>
<i class="a" style="left:850px;top:12px;width:1px;height:3px;background:#747474"></i>
<i class="a" style="left:857px;top:12px;width:1px;height:3px;background:#747474"></i>
<i class="a" style="left:864px;top:12px;width:1px;height:3px;background:#747474"></i>
<i class="a" style="left:870px;top:12px;width:1px;height:3px;background:#747474"></i>
<i class="a" style="left:877px;top:0;width:1px;height:15px;background:#747474"></i>
<i class="a" style="left:883px;top:12px;width:1px;height:3px;background:#747474"></i>
<i class="a" style="left:890px;top:12px;width:1px;height:3px;background:#747474"></i>
<i class="a" style="left:897px;top:12px;width:1px;height:3px;background:#747474"></i>
<i class="a" style="left:903px;top:12px;width:1px;height:3px;background:#747474"></i>
<i class="a" style="left:910px;top:0;width:1px;height:15px;background:#747474"></i>
<i class="a" style="left:917px;top:12px;width:1px;height:3px;background:#747474"></i>
<i class="a" style="left:923px;top:12px;width:1px;height:3px;background:#747474"></i>
<i class="a" style="left:930px;top:12px;width:1px;height:3px;background:#747474"></i>
<i class="a" style="left:936px;top:12px;width:1px;height:3px;background:#747474"></i>
<i class="a" style="left:943px;top:0;width:1px;height:15px;background:#747474"></i>
<i class="a" style="left:950px;top:12px;width:1px;height:3px;background:#747474"></i>
<i class="a" style="left:956px;top:12px;width:1px;height:3px;background:#747474"></i>
<i class="a" style="left:963px;top:12px;width:1px;height:3px;background:#747474"></i>
<i class="a" style="left:969px;top:12px;width:1px;height:3px;background:#747474"></i>
<i class="a" style="left:976px;top:0;width:1px;height:15px;background:#747474"></i>
<i class="a" style="left:983px;top:12px;width:1px;height:3px;background:#747474"></i>
<i class="a" style="left:989px;top:12px;width:1px;height:3px;background:#747474"></i>
<i class="a" style="left:996px;top:12px;width:1px;height:3px;background:#747474"></i>
<i class="a" style="left:1002px;top:12px;width:1px;height:3px;background:#747474"></i>
<i class="a" style="left:1009px;top:0;width:1px;height:15px;background:#747474"></i>
<i class="a" style="left:1016px;top:12px;width:1px;height:3px;background:#747474"></i>
<i class="a" style="left:0;top:15px;width:1017px;height:1px;background:#747474"></i>
</div>
<div class="a" id="vruler">
<i class="a" style="left:0;top:-1px;width:16px;height:1px;background:#747474"></i>
<span class="rt" style="left:2px;top:-0.09999999999999998px;width:7px;letter-spacing:0;text-align:center">5</span>
<span class="rt" style="left:2px;top:7.9px;width:7px;letter-spacing:0;text-align:center">0</span>
<i class="a" style="left:12px;top:5px;width:3px;height:1px;background:#747474"></i>
<i class="a" style="left:12px;top:12px;width:3px;height:1px;background:#747474"></i>
<i class="a" style="left:12px;top:19px;width:3px;height:1px;background:#747474"></i>
<i class="a" style="left:12px;top:25px;width:3px;height:1px;background:#747474"></i>
<i class="a" style="left:0;top:32px;width:16px;height:1px;background:#747474"></i>
<span class="rt" style="left:2px;top:32.9px;width:7px;letter-spacing:0;text-align:center">0</span>
<i class="a" style="left:12px;top:39px;width:3px;height:1px;background:#747474"></i>
<i class="a" style="left:12px;top:45px;width:3px;height:1px;background:#747474"></i>
<i class="a" style="left:12px;top:52px;width:3px;height:1px;background:#747474"></i>
<i class="a" style="left:12px;top:58px;width:3px;height:1px;background:#747474"></i>
<i class="a" style="left:0;top:65px;width:16px;height:1px;background:#747474"></i>
<span class="rt" style="left:2px;top:65.9px;width:7px;letter-spacing:0;text-align:center">5</span>
<span class="rt" style="left:2px;top:73.9px;width:7px;letter-spacing:0;text-align:center">0</span>
<i class="a" style="left:12px;top:72px;width:3px;height:1px;background:#747474"></i>
<i class="a" style="left:12px;top:78px;width:3px;height:1px;background:#747474"></i>
<i class="a" style="left:12px;top:85px;width:3px;height:1px;background:#747474"></i>
<i class="a" style="left:12px;top:91px;width:3px;height:1px;background:#747474"></i>
<i class="a" style="left:0;top:98px;width:16px;height:1px;background:#747474"></i>
<span class="rt" style="left:2px;top:98.9px;width:7px;letter-spacing:0;text-align:center">1</span>
<span class="rt" style="left:2px;top:106.9px;width:7px;letter-spacing:0;text-align:center">0</span>
<span class="rt" style="left:2px;top:114.9px;width:7px;letter-spacing:0;text-align:center">0</span>
<i class="a" style="left:12px;top:105px;width:3px;height:1px;background:#747474"></i>
<i class="a" style="left:12px;top:111px;width:3px;height:1px;background:#747474"></i>
<i class="a" style="left:12px;top:118px;width:3px;height:1px;background:#747474"></i>
<i class="a" style="left:12px;top:124px;width:3px;height:1px;background:#747474"></i>
<i class="a" style="left:0;top:131px;width:16px;height:1px;background:#747474"></i>
<span class="rt" style="left:2px;top:131.9px;width:7px;letter-spacing:0;text-align:center">1</span>
<span class="rt" style="left:2px;top:139.9px;width:7px;letter-spacing:0;text-align:center">5</span>
<span class="rt" style="left:2px;top:147.9px;width:7px;letter-spacing:0;text-align:center">0</span>
<i class="a" style="left:12px;top:138px;width:3px;height:1px;background:#747474"></i>
<i class="a" style="left:12px;top:144px;width:3px;height:1px;background:#747474"></i>
<i class="a" style="left:12px;top:151px;width:3px;height:1px;background:#747474"></i>
<i class="a" style="left:12px;top:157px;width:3px;height:1px;background:#747474"></i>
<i class="a" style="left:0;top:164px;width:16px;height:1px;background:#747474"></i>
<span class="rt" style="left:2px;top:164.9px;width:7px;letter-spacing:0;text-align:center">2</span>
<span class="rt" style="left:2px;top:172.9px;width:7px;letter-spacing:0;text-align:center">0</span>
<span class="rt" style="left:2px;top:180.9px;width:7px;letter-spacing:0;text-align:center">0</span>
<i class="a" style="left:12px;top:171px;width:3px;height:1px;background:#747474"></i>
<i class="a" style="left:12px;top:177px;width:3px;height:1px;background:#747474"></i>
<i class="a" style="left:12px;top:184px;width:3px;height:1px;background:#747474"></i>
<i class="a" style="left:12px;top:190px;width:3px;height:1px;background:#747474"></i>
<i class="a" style="left:0;top:197px;width:16px;height:1px;background:#747474"></i>
<span class="rt" style="left:2px;top:197.9px;width:7px;letter-spacing:0;text-align:center">2</span>
<span class="rt" style="left:2px;top:205.9px;width:7px;letter-spacing:0;text-align:center">5</span>
<span class="rt" style="left:2px;top:213.9px;width:7px;letter-spacing:0;text-align:center">0</span>
<i class="a" style="left:12px;top:204px;width:3px;height:1px;background:#747474"></i>
<i class="a" style="left:12px;top:210px;width:3px;height:1px;background:#747474"></i>
<i class="a" style="left:12px;top:217px;width:3px;height:1px;background:#747474"></i>
<i class="a" style="left:12px;top:224px;width:3px;height:1px;background:#747474"></i>
<i class="a" style="left:0;top:230px;width:16px;height:1px;background:#747474"></i>
<span class="rt" style="left:2px;top:230.9px;width:7px;letter-spacing:0;text-align:center">3</span>
<span class="rt" style="left:2px;top:238.9px;width:7px;letter-spacing:0;text-align:center">0</span>
<span class="rt" style="left:2px;top:246.9px;width:7px;letter-spacing:0;text-align:center">0</span>
<i class="a" style="left:12px;top:237px;width:3px;height:1px;background:#747474"></i>
<i class="a" style="left:12px;top:243px;width:3px;height:1px;background:#747474"></i>
<i class="a" style="left:12px;top:250px;width:3px;height:1px;background:#747474"></i>
<i class="a" style="left:12px;top:257px;width:3px;height:1px;background:#747474"></i>
<i class="a" style="left:0;top:263px;width:16px;height:1px;background:#747474"></i>
<span class="rt" style="left:2px;top:263.9px;width:7px;letter-spacing:0;text-align:center">3</span>
<span class="rt" style="left:2px;top:271.9px;width:7px;letter-spacing:0;text-align:center">5</span>
<span class="rt" style="left:2px;top:279.9px;width:7px;letter-spacing:0;text-align:center">0</span>
<i class="a" style="left:12px;top:270px;width:3px;height:1px;background:#747474"></i>
<i class="a" style="left:12px;top:276px;width:3px;height:1px;background:#747474"></i>
<i class="a" style="left:12px;top:283px;width:3px;height:1px;background:#747474"></i>
<i class="a" style="left:12px;top:290px;width:3px;height:1px;background:#747474"></i>
<i class="a" style="left:0;top:296px;width:16px;height:1px;background:#747474"></i>
<span class="rt" style="left:2px;top:296.9px;width:7px;letter-spacing:0;text-align:center">4</span>
<span class="rt" style="left:2px;top:304.9px;width:7px;letter-spacing:0;text-align:center">0</span>
<span class="rt" style="left:2px;top:312.9px;width:7px;letter-spacing:0;text-align:center">0</span>
<i class="a" style="left:12px;top:303px;width:3px;height:1px;background:#747474"></i>
<i class="a" style="left:12px;top:309px;width:3px;height:1px;background:#747474"></i>
<i class="a" style="left:12px;top:316px;width:3px;height:1px;background:#747474"></i>
<i class="a" style="left:12px;top:323px;width:3px;height:1px;background:#747474"></i>
<i class="a" style="left:0;top:329px;width:16px;height:1px;background:#747474"></i>
<span class="rt" style="left:2px;top:329.9px;width:7px;letter-spacing:0;text-align:center">4</span>
<span class="rt" style="left:2px;top:337.9px;width:7px;letter-spacing:0;text-align:center">5</span>
<span class="rt" style="left:2px;top:345.9px;width:7px;letter-spacing:0;text-align:center">0</span>
<i class="a" style="left:12px;top:336px;width:3px;height:1px;background:#747474"></i>
<i class="a" style="left:12px;top:342px;width:3px;height:1px;background:#747474"></i>
<i class="a" style="left:12px;top:349px;width:3px;height:1px;background:#747474"></i>
<i class="a" style="left:12px;top:356px;width:3px;height:1px;background:#747474"></i>
<i class="a" style="left:0;top:362px;width:16px;height:1px;background:#747474"></i>
<span class="rt" style="left:2px;top:362.9px;width:7px;letter-spacing:0;text-align:center">5</span>
<span class="rt" style="left:2px;top:370.9px;width:7px;letter-spacing:0;text-align:center">0</span>
<span class="rt" style="left:2px;top:378.9px;width:7px;letter-spacing:0;text-align:center">0</span>
<i class="a" style="left:12px;top:369px;width:3px;height:1px;background:#747474"></i>
<i class="a" style="left:12px;top:375px;width:3px;height:1px;background:#747474"></i>
<i class="a" style="left:12px;top:382px;width:3px;height:1px;background:#747474"></i>
<i class="a" style="left:12px;top:389px;width:3px;height:1px;background:#747474"></i>
<i class="a" style="left:0;top:395px;width:16px;height:1px;background:#747474"></i>
<span class="rt" style="left:2px;top:395.9px;width:7px;letter-spacing:0;text-align:center">5</span>
<span class="rt" style="left:2px;top:403.9px;width:7px;letter-spacing:0;text-align:center">5</span>
<span class="rt" style="left:2px;top:411.9px;width:7px;letter-spacing:0;text-align:center">0</span>
<i class="a" style="left:12px;top:402px;width:3px;height:1px;background:#747474"></i>
<i class="a" style="left:12px;top:408px;width:3px;height:1px;background:#747474"></i>
<i class="a" style="left:12px;top:415px;width:3px;height:1px;background:#747474"></i>
<i class="a" style="left:12px;top:422px;width:3px;height:1px;background:#747474"></i>
<i class="a" style="left:0;top:428px;width:16px;height:1px;background:#747474"></i>
<span class="rt" style="left:2px;top:428.9px;width:7px;letter-spacing:0;text-align:center">6</span>
<span class="rt" style="left:2px;top:436.9px;width:7px;letter-spacing:0;text-align:center">0</span>
<span class="rt" style="left:2px;top:444.9px;width:7px;letter-spacing:0;text-align:center">0</span>
<i class="a" style="left:12px;top:435px;width:3px;height:1px;background:#747474"></i>
<i class="a" style="left:12px;top:442px;width:3px;height:1px;background:#747474"></i>
<i class="a" style="left:12px;top:448px;width:3px;height:1px;background:#747474"></i>
<i class="a" style="left:12px;top:455px;width:3px;height:1px;background:#747474"></i>
<i class="a" style="left:0;top:461px;width:16px;height:1px;background:#747474"></i>
<span class="rt" style="left:2px;top:461.9px;width:7px;letter-spacing:0;text-align:center">6</span>
<span class="rt" style="left:2px;top:469.9px;width:7px;letter-spacing:0;text-align:center">5</span>
<span class="rt" style="left:2px;top:477.9px;width:7px;letter-spacing:0;text-align:center">0</span>
<i class="a" style="left:12px;top:468px;width:3px;height:1px;background:#747474"></i>
<i class="a" style="left:12px;top:475px;width:3px;height:1px;background:#747474"></i>
<i class="a" style="left:12px;top:481px;width:3px;height:1px;background:#747474"></i>
<i class="a" style="left:12px;top:488px;width:3px;height:1px;background:#747474"></i>
<i class="a" style="left:0;top:494px;width:16px;height:1px;background:#747474"></i>
<span class="rt" style="left:2px;top:494.9px;width:7px;letter-spacing:0;text-align:center">7</span>
<span class="rt" style="left:2px;top:502.9px;width:7px;letter-spacing:0;text-align:center">0</span>
<span class="rt" style="left:2px;top:510.9px;width:7px;letter-spacing:0;text-align:center">0</span>
<i class="a" style="left:12px;top:501px;width:3px;height:1px;background:#747474"></i>
<i class="a" style="left:12px;top:508px;width:3px;height:1px;background:#747474"></i>
<i class="a" style="left:12px;top:514px;width:3px;height:1px;background:#747474"></i>
<i class="a" style="left:12px;top:521px;width:3px;height:1px;background:#747474"></i>
<i class="a" style="left:0;top:527px;width:16px;height:1px;background:#747474"></i>
<span class="rt" style="left:2px;top:527.9px;width:7px;letter-spacing:0;text-align:center">7</span>
<span class="rt" style="left:2px;top:535.9px;width:7px;letter-spacing:0;text-align:center">5</span>
<span class="rt" style="left:2px;top:543.9px;width:7px;letter-spacing:0;text-align:center">0</span>
<i class="a" style="left:12px;top:534px;width:3px;height:1px;background:#747474"></i>
<i class="a" style="left:12px;top:541px;width:3px;height:1px;background:#747474"></i>
<i class="a" style="left:12px;top:547px;width:3px;height:1px;background:#747474"></i>
<i class="a" style="left:12px;top:554px;width:3px;height:1px;background:#747474"></i>
<i class="a" style="left:0;top:560px;width:16px;height:1px;background:#747474"></i>
<span class="rt" style="left:2px;top:560.9px;width:7px;letter-spacing:0;text-align:center">8</span>
<span class="rt" style="left:2px;top:568.9px;width:7px;letter-spacing:0;text-align:center">0</span>
<span class="rt" style="left:2px;top:576.9px;width:7px;letter-spacing:0;text-align:center">0</span>
<i class="a" style="left:12px;top:567px;width:3px;height:1px;background:#747474"></i>
<i class="a" style="left:12px;top:574px;width:3px;height:1px;background:#747474"></i>
<i class="a" style="left:12px;top:580px;width:3px;height:1px;background:#747474"></i>
<i class="a" style="left:12px;top:587px;width:3px;height:1px;background:#747474"></i>
<i class="a" style="left:15px;top:0;width:1px;height:591px;background:#747474"></i>
</div>
<div class="a" id="corner"><i class="a" style="left:11px;top:1px;width:0;height:14px;border-left:1px dotted #6a6a6a"></i><i class="a" style="left:1px;top:11px;width:14px;height:0;border-top:1px dotted #6a6a6a"></i></div>
<i class="a" style="left:661px;top:84px;width:0;height:14px;border-left:1px dotted #e8e8e8"></i>
<i class="a" style="left:42px;top:519px;width:14px;height:0;border-top:1px dotted #e8e8e8"></i>
<div class="a" style="left:1058px;top:82px;width:16px;height:608px;background:linear-gradient(90deg,#2c2c2c,#464646)"></div>
<svg style="left:1063px;top:88px" width="6" height="4"><path d="M0 3.7L3 0L6 3.7Z" fill="#f0f0f0"/></svg>
<svg style="left:1063px;top:681px" width="6" height="4"><path d="M0 0L3 3.7L6 0Z" fill="#f0f0f0"/></svg>
<div class="a" style="left:1060px;top:201px;width:12px;height:125px;border-radius:4px;background:linear-gradient(90deg,#9c9c9c,#6a6a6a);box-shadow:0 0 0 1px rgba(30,30,30,.35)"></div>
<div class="a" style="left:1074px;top:63px;width:3px;height:665px;background:linear-gradient(90deg,#2b2b2b 0 1px,#484848 1px 2px,#2b2b2b 2px 3px)"></div>
<div class="a" style="left:41px;top:690px;width:1033px;height:18px;background:#2b2b2b"></div><div class="a" style="left:41px;top:690px;width:1017px;height:16px;background:linear-gradient(#2a2a2a,#474747)"></div>
<div class="a" style="left:41px;top:690px;width:48px;height:16px;background:#484848"></div>
<span class="t" style="left:54.5px;top:693.0px;font-size:10px;line-height:1;letter-spacing:-0.01px;color:#f4f4f4;">66%</span>
<div class="a" style="left:89px;top:690px;width:24px;height:16px;background:#5c5c5c;border-left:1px solid #3a3a3a;border-right:1px solid #3a3a3a"></div>
<svg style="left:95px;top:692px" width="13" height="13"><circle cx="6.500" cy="6.500" r="6" fill="#bdbdbd"/><path d="M4 3.500H7.500L9.500 5.500V9.500H4Z" fill="#f4f4f4" stroke="#555" stroke-width=".8"/></svg>
<div class="a" style="left:113px;top:690px;width:171px;height:16px;background:#4c4c4c"></div>
<span class="t" style="left:157.0px;top:693.0px;font-size:10px;line-height:1;letter-spacing:-0.16px;color:#f4f4f4;">Doc: 10.0M/255.9K</span>
<div class="a" style="left:284px;top:690px;width:13px;height:16px;background:#3e3e3e;border-left:1px solid #303030"></div>
<svg style="left:287px;top:694px" width="7" height="11"><path d="M0 0L7 5.500L0 11Z" fill="#f2f2f2"/></svg>
<svg style="left:302px;top:697px" width="4" height="6"><path d="M4 0L0 3L4 6Z" fill="#e8e8e8"/></svg>
<svg style="left:1048px;top:697px" width="4" height="6"><path d="M0 0L4 3L0 6Z" fill="#e8e8e8"/></svg>
<div class="a" style="left:546px;top:692px;width:263px;height:12px;border-radius:4px;background:linear-gradient(#8f8f8f,#6c6c6c)"></div>
<div class="a" style="left:1058px;top:690px;width:16px;height:16px;background:#555"></div>
<div class="a" style="left:41px;top:708px;width:1033px;height:20px;background:#3a3a3a;border-top:1px solid #444;border-bottom:1px solid #2a2a2a;box-shadow:inset 0 -1px 0 #565656"></div>
<div class="a" style="left:41px;top:709px;width:70px;height:17px;background:#535353;border-right:1px solid #2e2e2e"></div>
<div class="a" style="left:111px;top:709px;width:56px;height:17px;background:#454545;border-right:1px solid #2e2e2e"></div>
<span class="t" style="left:48.5px;top:712.4px;font-size:10.8px;line-height:1;letter-spacing:-0.38px;color:#f2f2f2;font-weight:bold;">Mini Bridge</span>
<span class="t" style="left:118.5px;top:712.4px;font-size:10.8px;line-height:1;letter-spacing:-0.52px;color:#9c9c9c;font-weight:bold;">Timeline</span>
<svg style="left:1056px;top:714px" width="14" height="7"><path d="M0 1.500H5L2.500 4.500Z" fill="#ddd"/><path d="M6 .5H14M6 2.500H14M6 4.500H14M6 6.500H14" stroke="#ddd" stroke-width="1"/></svg>
<div class="a" style="left:0;top:727px;width:1366px;height:2px;background:#1c1e20"></div><div class="a" style="left:0;top:729px;width:1366px;height:7px;background:linear-gradient(90deg,#1f2c38,#26343f 20%,#1d2935 45%,#2e3f4e 62%,#1f2b37 80%,#25333f);border-top:1px solid #8a9aa8"></div>
<div class="a" style="left:122px;top:730px;width:53px;height:8px;border:1px solid #c2c9cf;border-bottom:0;border-radius:3px 3px 0 0;background:linear-gradient(#8e979f,#767f88)"></div>
<div class="a" style="left:184px;top:730px;width:58px;height:8px;border:1px solid #c2c9cf;border-bottom:0;border-radius:3px 3px 0 0;background:linear-gradient(#8e979f,#767f88)"></div>
<div class="a" style="left:246px;top:730px;width:58px;height:8px;border:1px solid #c2c9cf;border-bottom:0;border-radius:3px 3px 0 0;background:linear-gradient(#8e979f,#767f88)"></div>
<div class="a" style="left:432px;top:730px;width:58px;height:8px;border:1px solid #c2c9cf;border-bottom:0;border-radius:3px 3px 0 0;background:linear-gradient(#8e979f,#767f88)"></div>
<div class="a" style="left:494px;top:730px;width:58px;height:8px;border:1px solid #e4eaef;border-bottom:0;border-radius:3px 3px 0 0;background:linear-gradient(#b4bdc5,#98a3ac)"></div>
<div class="a" style="left:556px;top:730px;width:58px;height:8px;border:1px solid #c2c9cf;border-bottom:0;border-radius:3px 3px 0 0;background:linear-gradient(#8e979f,#767f88)"></div>
<div class="a" style="left:618px;top:730px;width:58px;height:8px;border:1px solid #c2c9cf;border-bottom:0;border-radius:3px 3px 0 0;background:linear-gradient(#8e979f,#767f88)"></div>
<div class="a" style="left:12px;top:730px;width:29px;height:29px;border-radius:15px;border:1.500px solid #d4e4f0;background:radial-gradient(circle at 50% 25%,#b8d0e4,#5f8db5 60%)"></div>
<div class="a" style="left:92px;top:733px;width:14px;height:10px;border-radius:7px;border:1.500px solid #e0b81c"></div>
<div class="a" style="left:134px;top:734px;width:15px;height:2px;background:#d9b24a;border-radius:0px"></div>
<div class="a" style="left:204px;top:731px;width:16px;height:10px;background:#d9392f;border-radius:8px"></div>
<div class="a" style="left:246px;top:730px;width:2px;height:6px;background:#e8e27a;border-radius:0px"></div>
<div class="a" style="left:258px;top:734px;width:9px;height:2px;background:#6a3fa0;border-radius:0px"></div>
<div class="a" style="left:323px;top:732px;width:28px;height:4px;background:#b9bcc0;border-radius:0px"></div>
<div class="a" style="left:391px;top:731px;width:17px;height:10px;background:#2f9fe0;border-radius:8px"></div>
<div class="a" style="left:467px;top:732px;width:7px;height:4px;background:#e09a3a;border-radius:0px"></div>
<div class="a" style="left:508px;top:733px;width:30px;height:3px;background:#2a4f9a;border-radius:0px"></div>
<div class="a" style="left:508px;top:732px;width:30px;height:1px;background:#9fd0ff;border-radius:0px"></div>
<div class="a" style="left:569px;top:733px;width:18px;height:3px;background:#2f5fb0;border-radius:0px"></div>
<div class="a" style="left:636px;top:731px;width:18px;height:10px;background:#fff;border-radius:9px"></div>
<div class="a" style="left:637px;top:731px;width:16px;height:10px;background:#d9392f;border-radius:8px"></div>
<div class="a" style="left:640px;top:733px;width:10px;height:6px;background:#fff;border-radius:5px"></div>
<div class="a" style="left:1354px;top:729px;width:12px;height:7px;background:#7e8a94;border-radius:0;border-left:1px solid #aab3bapx"></div>
<div class="a" style="left:1077px;top:63px;width:37px;height:664px;background:#535353;"></div>
<div class="a" style="left:1077px;top:63px;width:37px;height:12px;background:#3a3a3a;border-bottom:1px solid #2b2b2b"></div>
<svg style="left:1102px;top:66px" width="9" height="6"><path d="M3.500 0L0 3L3.500 6ZM8 0L4.500 3L8 6Z" fill="#d4d4d4"/></svg>
<div class="a" style="left:1077px;top:75px;width:37px;height:41px;background:#535353;border-bottom:1px solid #2e2e2e;box-shadow:inset 0 1px 0 #626262"></div>
<i class="a" style="left:1086px;top:79px;width:20px;height:3px;background:repeating-linear-gradient(90deg,#2e2e2e 0 1px,transparent 1px 2px)"></i>
<div class="a" style="left:1077px;top:116px;width:37px;height:41px;background:#535353;border-bottom:1px solid #2e2e2e;box-shadow:inset 0 1px 0 #626262"></div>
<i class="a" style="left:1086px;top:120px;width:20px;height:3px;background:repeating-linear-gradient(90deg,#2e2e2e 0 1px,transparent 1px 2px)"></i>
<div class="a" style="left:1077px;top:157px;width:37px;height:69px;background:#535353;border-bottom:1px solid #2e2e2e;box-shadow:inset 0 1px 0 #626262"></div>
<i class="a" style="left:1086px;top:161px;width:20px;height:3px;background:repeating-linear-gradient(90deg,#2e2e2e 0 1px,transparent 1px 2px)"></i>
<div class="a" style="left:1077px;top:226px;width:37px;height:69px;background:#535353;border-bottom:1px solid #2e2e2e;box-shadow:inset 0 1px 0 #626262"></div>
<i class="a" style="left:1086px;top:230px;width:20px;height:3px;background:repeating-linear-gradient(90deg,#2e2e2e 0 1px,transparent 1px 2px)"></i>
<div class="a" style="left:1077px;top:295px;width:37px;height:41px;background:#535353;border-bottom:1px solid #2e2e2e;box-shadow:inset 0 1px 0 #626262"></div>
<i class="a" style="left:1086px;top:299px;width:20px;height:3px;background:repeating-linear-gradient(90deg,#2e2e2e 0 1px,transparent 1px 2px)"></i>
<div class="a" style="left:1077px;top:336px;width:37px;height:391px;background:#515151;box-shadow:inset 0 1px 0 #5e5e5e"></div>
<svg style="left:1090px;top:89px" width="16" height="18"><rect x=".5" y=".5" width="4" height="4" fill="none" stroke="#c8c8c8"/><rect x=".5" y="6.500" width="4" height="4" fill="none" stroke="#c8c8c8"/><rect x="0" y="12" width="5" height="5" fill="#aaa"/><path d="M7.300 4L12 1V7Z" fill="#c8c8c8"/><path d="M11 3.200C16 4 15.500 11.500 9.500 15.500C12.500 11 13 6.500 11 5Z" fill="#c8c8c8"/></svg>
<svg style="left:1088px;top:131px" width="17" height="17"><path d="M5.500 .5L10.500 2.500V8L5.500 10.500L.5 8V2.500Z" fill="#8a8a8a" stroke="#c8c8c8" stroke-width="1"/><path d="M.5 2.500L5.500 4.800L10.500 2.500M5.500 4.800V10.500" fill="none" stroke="#c8c8c8" stroke-width="1"/><rect x="12" y="1" width="4" height="3" fill="#c8c8c8"/><rect x="12" y="6" width="4" height="3" fill="#c8c8c8"/><rect x="0" y="12.500" width="16.500" height="4" fill="#b4b4b4"/><path d="M12 13.500H15.500L13.700 15.800Z" fill="#444"/></svg>
<svg style="left:1088px;top:170px" width="16" height="21"><path d="M4.500 10.500H12.500V20H4.500Z" fill="#b8b8b8"/><path d="M3.500 1C5.500 3 6 6 5.500 9.500H3C1.500 6 2 3 3.500 1ZM8.500 0C10 2 10 5 9.500 9.500H7.500C7 5 7 2 8.500 0ZM13 3C15 5 14.500 7.500 12.500 9.500H10.800C10.800 7 11.500 4.500 13 3Z" fill="#c8c8c8"/></svg>
<svg style="left:1088px;top:200px" width="18" height="18"><path d="M0 4C1.500 1.500 5.500 1 7.500 3L7 6C4.500 7 2 6.500 0 4Z" fill="#c8c8c8"/><path d="M7.500 4.500H17.500" stroke="#c8c8c8" stroke-width="1.600"/><path d="M0 11.500H10.500" stroke="#c8c8c8" stroke-width="1.600"/><path d="M10.500 10L14.500 7.500C17.500 9 18.500 13 16.500 17C14.500 14.500 12.500 13.500 10.500 13Z" fill="#c8c8c8"/></svg>
<span class="t" style="left:1089.0px;top:240.8px;font-size:16.5px;line-height:1;color:#bcbcbc;font-weight:bold;">A</span>
<div class="a" style="left:1102px;top:240px;width:1px;height:19px;background:#c6c6c6;"></div>
<svg style="left:1090px;top:270px" width="12" height="15"><path d="M5 0H11.500V1.500H10.500V14.500H9V1.500H7.500V14.500H6V8C2.500 8 0 6.500 0 4C0 1.500 2.500 0 5 0Z" fill="#c8c8c8"/></svg>
<svg style="left:1087px;top:308px" width="20" height="20"><rect x="2" y="3" width="3" height="3" fill="#c4c4c4"/><rect x="2" y="9" width="3" height="3" fill="#c4c4c4"/><rect x="2" y="15" width="3" height="3" fill="#c4c4c4"/><rect x="8" y="3" width="3" height="3" fill="#c4c4c4"/><rect x="8" y="9" width="3" height="3" fill="#c4c4c4"/><rect x="8" y="15" width="3" height="3" fill="#c4c4c4"/><rect x="14" y="3" width="3" height="3" fill="#c4c4c4"/><rect x="14" y="9" width="3" height="3" fill="#c4c4c4"/><rect x="14" y="15" width="3" height="3" fill="#c4c4c4"/><path d="M6.500 0V20M12.500 0V20M0 7.500H19M0 13.500H19" stroke="#d0d0d0" stroke-width="1"/></svg>
<div class="a" style="left:1114px;top:63px;width:3px;height:665px;background:linear-gradient(90deg,#2b2b2b 0 1px,#484848 1px 2px,#2b2b2b 2px 3px);"></div>
<div class="a" style="left:1117px;top:63px;width:249px;height:12px;background:#3a3a3a;border-bottom:1px solid #2b2b2b"></div>
<svg style="left:1354px;top:66px" width="9" height="6"><path d="M0 0L3.500 3L0 6ZM4.500 0L8 3L4.500 6Z" fill="#d4d4d4"/></svg>
<div class="a" style="left:1117px;top:75px;width:249px;height:17px;background:#3a3a3a;border-bottom:1px solid #2e2e2e"></div>
<div class="a" style="left:1117px;top:75px;width:40px;height:17px;background:#454545;border-right:1px solid #2e2e2e;border-bottom:1px solid #2e2e2e"></div>
<span class="t" style="left:1124.0px;top:78.4px;font-size:10.8px;line-height:1;letter-spacing:-0.80px;color:#a2a2a2;font-weight:bold;">Color</span>
<div class="a" style="left:1157px;top:75px;width:60px;height:17px;background:#454545;border-right:1px solid #2e2e2e;border-bottom:1px solid #2e2e2e"></div>
<span class="t" style="left:1165.0px;top:78.4px;font-size:10.8px;line-height:1;letter-spacing:-0.90px;color:#a2a2a2;font-weight:bold;">Swatches</span>
<div class="a" style="left:1217px;top:75px;width:33px;height:18px;background:#535353;border-right:1px solid #2e2e2e;box-shadow:inset 0 1px 0 #626262"></div>
<span class="t" style="left:1223.5px;top:78.4px;font-size:10.8px;line-height:1;letter-spacing:-0.10px;color:#f4f4f4;font-weight:bold;">Info</span>
<svg style="left:1347px;top:80px" width="15" height="7"><path d="M0 1.500H5.500L2.750 4.500Z" fill="#e0e0e0"/><path d="M6.500 .5H14.500M6.500 2.500H14.500M6.500 4.500H14.500M6.500 6.500H14.500" stroke="#e0e0e0" stroke-width="1"/></svg>
<div class="a" style="left:1117px;top:93px;width:249px;height:223px;background:#535353;border-top:0"></div>
<span class="t" style="left:1151.5px;top:100.5px;font-size:10px;line-height:1;color:#f4f4f4;">R</span>
<span class="t" style="left:1164.5px;top:100.5px;font-size:10px;line-height:1;color:#f4f4f4;">:</span>
<span class="t" style="left:1204.0px;top:100.5px;font-size:10px;line-height:1;letter-spacing:-0.59px;color:#f4f4f4;">255</span>
<span class="t" style="left:1151.5px;top:111.5px;font-size:10px;line-height:1;color:#f4f4f4;">G</span>
<span class="t" style="left:1164.5px;top:111.5px;font-size:10px;line-height:1;color:#f4f4f4;">:</span>
<span class="t" style="left:1204.0px;top:111.5px;font-size:10px;line-height:1;letter-spacing:-0.59px;color:#f4f4f4;">255</span>
<span class="t" style="left:1151.5px;top:122.5px;font-size:10px;line-height:1;color:#f4f4f4;">B</span>
<span class="t" style="left:1164.5px;top:122.5px;font-size:10px;line-height:1;color:#f4f4f4;">:</span>
<span class="t" style="left:1204.0px;top:122.5px;font-size:10px;line-height:1;letter-spacing:-0.59px;color:#f4f4f4;">255</span>
<svg style="left:1125px;top:111px" width="14" height="14"><path d="M.8 12.200L1.500 9.200L7.500 3.200L9.800 5.500L3.800 11.500Z" fill="#6a6a6a" stroke="#d0d0d0" stroke-width="1"/><path d="M7 2L11 6" stroke="#d8d8d8" stroke-width="2"/><path d="M9.500 3.500L12 1" stroke="#cfcfcf" stroke-width="3" stroke-linecap="round"/><path d="M8.500 10H13.500L11 13Z" fill="#d0d0d0"/></svg>
<span class="t" style="left:1146.0px;top:144.5px;font-size:10px;line-height:1;letter-spacing:0.39px;color:#f4f4f4;">8-bit</span>
<span class="t" style="left:1274.5px;top:100.5px;font-size:10px;line-height:1;color:#f4f4f4;">C</span>
<span class="t" style="left:1287.5px;top:100.5px;font-size:10px;line-height:1;color:#f4f4f4;">:</span>
<span class="t" style="left:1332.0px;top:100.5px;font-size:10px;line-height:1;letter-spacing:0.05px;color:#f4f4f4;">0%</span>
<span class="t" style="left:1273.0px;top:111.5px;font-size:10px;line-height:1;color:#f4f4f4;">M</span>
<span class="t" style="left:1287.5px;top:111.5px;font-size:10px;line-height:1;color:#f4f4f4;">:</span>
<span class="t" style="left:1332.0px;top:111.5px;font-size:10px;line-height:1;letter-spacing:0.05px;color:#f4f4f4;">0%</span>
<span class="t" style="left:1275.0px;top:122.5px;font-size:10px;line-height:1;color:#f4f4f4;">Y</span>
<span class="t" style="left:1287.5px;top:122.5px;font-size:10px;line-height:1;color:#f4f4f4;">:</span>
<span class="t" style="left:1332.0px;top:122.5px;font-size:10px;line-height:1;letter-spacing:0.05px;color:#f4f4f4;">0%</span>
<span class="t" style="left:1275.0px;top:133.5px;font-size:10px;line-height:1;color:#f4f4f4;">K</span>
<span class="t" style="left:1287.5px;top:133.5px;font-size:10px;line-height:1;color:#f4f4f4;">:</span>
<span class="t" style="left:1332.0px;top:133.5px;font-size:10px;line-height:1;letter-spacing:0.05px;color:#f4f4f4;">0%</span>
<svg style="left:1248px;top:111px" width="14" height="14"><path d="M.8 12.200L1.500 9.200L7.500 3.200L9.800 5.500L3.800 11.500Z" fill="#6a6a6a" stroke="#d0d0d0" stroke-width="1"/><path d="M7 2L11 6" stroke="#d8d8d8" stroke-width="2"/><path d="M9.500 3.500L12 1" stroke="#cfcfcf" stroke-width="3" stroke-linecap="round"/><path d="M8.500 10H13.500L11 13Z" fill="#d0d0d0"/></svg>
<span class="t" style="left:1269.0px;top:144.5px;font-size:10px;line-height:1;letter-spacing:0.39px;color:#f4f4f4;">8-bit</span>
<div class="a" style="left:1239px;top:94px;width:1px;height:65px;background:#404040;"></div><div class="a" style="left:1240px;top:94px;width:1px;height:65px;background:#5d5d5d;"></div>
<div class="a" style="left:1117px;top:160px;width:249px;height:1px;background:#404040;"></div><div class="a" style="left:1117px;top:161px;width:249px;height:1px;background:#5d5d5d;"></div>
<svg style="left:1124px;top:171px" width="16" height="15"><path d="M6.500 0V13M0 6.500H13" stroke="#d6d6d6" stroke-width="1"/><path d="M9.500 10.500H14.500L12 13.500Z" fill="#d0d0d0"/></svg>
<span class="t" style="left:1151.5px;top:166.5px;font-size:10px;line-height:1;color:#f4f4f4;">X</span>
<span class="t" style="left:1164.5px;top:166.5px;font-size:10px;line-height:1;color:#f4f4f4;">:</span>
<span class="t" style="left:1201.0px;top:166.5px;font-size:10px;line-height:1;letter-spacing:-0.59px;color:#f4f4f4;">861</span>
<span class="t" style="left:1151.5px;top:177.5px;font-size:10px;line-height:1;color:#f4f4f4;">Y</span>
<span class="t" style="left:1164.5px;top:177.5px;font-size:10px;line-height:1;color:#f4f4f4;">:</span>
<span class="t" style="left:1201.0px;top:177.5px;font-size:10px;line-height:1;letter-spacing:-0.59px;color:#f4f4f4;">587</span>
<div class="a" style="left:1239px;top:163px;width:1px;height:31px;background:#404040;"></div><div class="a" style="left:1240px;top:163px;width:1px;height:31px;background:#5d5d5d;"></div>
<svg style="left:1247px;top:170px" width="16" height="16"><path d="M2.500 14V3.500H13" fill="none" stroke="#d6d6d6" stroke-width="1"/><path d="M11.500 1L15 3.500L11.500 6ZM0 11.500L2.500 15L5 11.500Z" fill="#d6d6d6"/><path d="M13.500 6.500V14.500H5.500" fill="none" stroke="#c8c8c8" stroke-width="1" stroke-dasharray="1 1"/></svg>
<span class="t" style="left:1271.5px;top:166.5px;font-size:10px;line-height:1;color:#f4f4f4;">W</span>
<span class="t" style="left:1287.5px;top:166.5px;font-size:10px;line-height:1;color:#f4f4f4;">:</span>
<span class="t" style="left:1273.0px;top:177.5px;font-size:10px;line-height:1;color:#f4f4f4;">H</span>
<span class="t" style="left:1287.5px;top:177.5px;font-size:10px;line-height:1;color:#f4f4f4;">:</span>
<div class="a" style="left:1117px;top:195px;width:249px;height:1px;background:#404040;"></div><div class="a" style="left:1117px;top:196px;width:249px;height:1px;background:#5d5d5d;"></div>
<span class="t" style="left:1128.0px;top:206.5px;font-size:10px;line-height:1;letter-spacing:-0.16px;color:#f4f4f4;">Doc: 10.0M/255.9K</span>
<div class="a" style="left:1117px;top:223px;width:249px;height:1px;background:#404040;"></div><div class="a" style="left:1117px;top:224px;width:249px;height:1px;background:#5d5d5d;"></div>
<span class="t" style="left:1128.0px;top:234.5px;font-size:10px;line-height:1;letter-spacing:-0.01px;color:#f4f4f4;">Click and drag to move guide.</span>
<div class="a" style="left:1117px;top:316px;width:249px;height:3px;background:#383838;"></div>
<div class="a" style="left:1117px;top:319px;width:249px;height:17px;background:#3a3a3a;border-bottom:1px solid #2e2e2e"></div>
<div class="a" style="left:1117px;top:319px;width:73px;height:18px;background:#535353;border-right:1px solid #2e2e2e;box-shadow:inset 0 1px 0 #626262"></div>
<span class="t" style="left:1124.0px;top:322.4px;font-size:10.8px;line-height:1;letter-spacing:-0.69px;color:#f4f4f4;font-weight:bold;">Adjustments</span>
<div class="a" style="left:1190px;top:319px;width:42px;height:17px;background:#454545;border-right:1px solid #2e2e2e;border-bottom:1px solid #2e2e2e"></div>
<span class="t" style="left:1197.0px;top:322.4px;font-size:10.8px;line-height:1;letter-spacing:-0.86px;color:#a2a2a2;font-weight:bold;">Styles</span>
<svg style="left:1347px;top:324px" width="15" height="7"><path d="M0 1.500H5.500L2.750 4.500Z" fill="#e0e0e0"/><path d="M6.500 .5H14.500M6.500 2.500H14.500M6.500 4.500H14.500M6.500 6.500H14.500" stroke="#e0e0e0" stroke-width="1"/></svg>
<div class="a" style="left:1117px;top:337px;width:249px;height:101px;background:#535353;"></div>
<span class="t" style="left:1126.0px;top:341.9px;font-size:10.8px;line-height:1;letter-spacing:-0.17px;color:#f6f6f6;font-weight:bold;">Add an adjustment</span>
<svg style="left:0;top:0" width="1366" height="736"><defs><linearGradient id="ah" x1="0" y1="0" x2="1" y2="0"><stop offset="0" stop-color="#4a4a4a"/><stop offset="1" stop-color="#c4c4c4"/></linearGradient><linearGradient id="av" x1="0" y1="0" x2="0" y2="1"><stop offset="0" stop-color="#c4c4c4"/><stop offset="1" stop-color="#4a4a4a"/></linearGradient><linearGradient id="ad" x1="0" y1="0" x2="1" y2="1"><stop offset="0" stop-color="#6a6a6a"/><stop offset=".5" stop-color="#b8b8b8"/><stop offset="1" stop-color="#6a6a6a"/></linearGradient><radialGradient id="ar" cx=".5" cy=".35" r=".5"><stop offset="0" stop-color="#5a5a5a"/><stop offset="1" stop-color="#c0c0c0"/></radialGradient></defs>
<path d="M1177.3 368.5L1180.1 368.5" stroke="#c6c6c6" stroke-width="1.700"/><path d="M1175.6 372.6L1177.6 374.6" stroke="#c6c6c6" stroke-width="1.700"/><path d="M1171.5 374.3L1171.5 377.1" stroke="#c6c6c6" stroke-width="1.700"/><path d="M1167.4 372.6L1165.4 374.6" stroke="#c6c6c6" stroke-width="1.700"/><path d="M1165.7 368.5L1162.9 368.5" stroke="#c6c6c6" stroke-width="1.700"/><path d="M1167.4 364.4L1165.4 362.4" stroke="#c6c6c6" stroke-width="1.700"/><path d="M1171.5 362.7L1171.5 359.9" stroke="#c6c6c6" stroke-width="1.700"/><path d="M1175.6 364.4L1177.6 362.4" stroke="#c6c6c6" stroke-width="1.700"/><circle cx="1171.5" cy="368.5" r="3.900" fill="#6a6a6a" stroke="#c6c6c6" stroke-width="1.200"/><path d="M1171.5 364.6A3.900 3.900 0 0 1 1171.5 372.4Z" fill="#c6c6c6"/>
<path d="M1187 373V366L1188.300 369.500L1190 363L1191.500 369L1193 362L1194.500 368.500L1196 361.500L1197.500 368.500L1199 362.500L1200.500 369L1202 363.500L1203.500 369.500L1205 366V373Z" fill="#c6c6c6"/>
<rect x="1212.5" y="361.5" width="15" height="13" fill="#6e6e6e" stroke="#c6c6c6"/><path d="M1217.500 361V375M1222.500 361V375M1212 365.500H1228M1212 370.500H1228" stroke="#a8a8a8" stroke-width="1"/><path d="M1212.500 374.500C1221 373.500 1219 362.500 1227.500 361.500" fill="none" stroke="#e6e6e6" stroke-width="1.300"/>
<rect x="1236.5" y="361.5" width="15" height="13" fill="#c0c0c0" stroke="#c6c6c6"/><path d="M1237 374L1251 362V374Z" fill="#5e5e5e"/><path d="M1238.500 365.500H1243.500M1241 363V368" stroke="#444" stroke-width="1.200"/><path d="M1245.500 371H1250" stroke="#e0e0e0" stroke-width="1.200"/>
<path d="M1260 361.500H1276L1268 376Z" fill="url(#ar)" stroke="#c6c6c6" stroke-width="1"/>
<rect x="1152.5" y="389.5" width="15" height="12" fill="url(#ah)" stroke="#c6c6c6"/><rect x="1153" y="390" width="14" height="5" fill="#a0a0a0"/><path d="M1155 390V395M1159 390V395M1163 390V395" stroke="#6c6c6c" stroke-width="2"/><path d="M1153 395.500H1167" stroke="#c6c6c6" stroke-width="1"/>
<path d="M1177.500 392.800L1183.500 390.500L1189.500 392.800" fill="none" stroke="#c6c6c6" stroke-width="1.800"/><path d="M1182.300 387H1184.700V389H1186.500L1183.500 392.200L1180.500 389H1182.300Z" fill="#c6c6c6"/><path d="M1175 398.500L1178 392.500L1181 398.500M1186 398.500L1189 392.500L1192 398.500" fill="none" stroke="#c6c6c6" stroke-width="1"/><path d="M1174.800 398.500H1181.200C1181 402 1175 402 1174.800 398.500ZM1185.800 398.500H1192.200C1192 402 1186 402 1185.800 398.500Z" fill="#c6c6c6"/>
<rect x="1200.5" y="389.5" width="15" height="12" fill="#cacaca" stroke="#c6c6c6"/><rect x="1201" y="390" width="6.500" height="11" fill="#4c4c4c"/>
<path d="M1223.500 390.500H1226V388.500H1231V390.500H1237.500V397.500H1223.500Z" fill="#b4b4b4"/><circle cx="1230.500" cy="394" r="2.200" fill="#6a6a6a" stroke="#e0e0e0" stroke-width=".8"/><circle cx="1235" cy="398" r="4.600" fill="rgba(140,140,140,.75)" stroke="#d0d0d0" stroke-width="1"/>
<circle cx="1255.500" cy="392.500" r="4.500" fill="#cfcfcf"/><circle cx="1252" cy="398" r="4.500" fill="#bdbdbd"/><circle cx="1259" cy="398" r="4.500" fill="#a9a9a9"/><path d="M1253 393.500H1258L1256.300 396.500V399.500H1254.700V396.500Z" fill="#3e3e3e"/>
<rect x="1272.500" y="389.500" width="15" height="12" fill="#c6c6c6" stroke="#c6c6c6"/><rect x="1273" y="390" width="4" height="3" fill="#9a9a9a"/><rect x="1278" y="390" width="4" height="3" fill="#8a8a8a"/><rect x="1283" y="390" width="4" height="3" fill="#6c6c6c"/><rect x="1273" y="394" width="4" height="3" fill="#8a8a8a"/><rect x="1278" y="394" width="4" height="3" fill="#5e5e5e"/><rect x="1283" y="394" width="4" height="3" fill="#4a4a4a"/><rect x="1273" y="398" width="4" height="3" fill="#6c6c6c"/><rect x="1278" y="398" width="4" height="3" fill="#4a4a4a"/><rect x="1283" y="398" width="4" height="3" fill="#3c3c3c"/>
<rect x="1164.5" y="416.5" width="15" height="12" fill="#b8b8b8" stroke="#c6c6c6"/><path d="M1165 428L1179 417V428Z" fill="#5a5a5a"/><ellipse cx="1172" cy="422.500" rx="4.200" ry="2.800" transform="rotate(-38 1172 422.500)" fill="#5a5a5a"/><path d="M1168.700 425.100A4.200 2.800 -38 0 0 1175.300 419.900Z" fill="#c4c4c4"/>
<rect x="1188.5" y="416.5" width="15" height="12" fill="url(#ad)" stroke="#c6c6c6"/><path d="M1189 424.500L1198 417H1202L1189 428ZM1194 428L1203 420.500V424L1198.500 428Z" fill="#7c7c7c"/>
<rect x="1212.5" y="416.5" width="15" height="12" fill="#bcbcbc" stroke="#c6c6c6"/><path d="M1213 424.500H1216V422.500H1219.500V420.500H1223V418.500H1227V421H1224.500V423H1221V425H1217.500V427H1213Z" fill="#4a4a4a"/><path d="M1221.500 427.500H1227V425.500H1224" fill="none" stroke="#4a4a4a" stroke-width="1.200"/>
<rect x="1236.5" y="416.5" width="15" height="12" fill="#bdbdbd" stroke="#c6c6c6"/><path d="M1237 417L1244 422.500L1237 428ZM1251 417L1244 422.500L1251 428Z" fill="#757575"/>
<rect x="1260.5" y="416.5" width="15" height="12" fill="url(#ah)" stroke="#c6c6c6"/>
</svg>
<div class="a" style="left:1117px;top:438px;width:249px;height:4px;background:#383838;"></div>
<div class="a" style="left:1117px;top:442px;width:249px;height:17px;background:#3a3a3a;border-bottom:1px solid #2e2e2e"></div>
<div class="a" style="left:1117px;top:442px;width:43px;height:18px;background:#535353;border-right:1px solid #2e2e2e;box-shadow:inset 0 1px 0 #626262"></div>
<span class="t" style="left:1124.0px;top:445.4px;font-size:10.8px;line-height:1;letter-spacing:-1.37px;color:#f4f4f4;font-weight:bold;">Layers</span>
<div class="a" style="left:1160px;top:442px;width:56px;height:17px;background:#454545;border-right:1px solid #2e2e2e;border-bottom:1px solid #2e2e2e"></div>
<span class="t" style="left:1167.0px;top:445.4px;font-size:10.8px;line-height:1;letter-spacing:-1.02px;color:#a2a2a2;font-weight:bold;">Channels</span>
<div class="a" style="left:1216px;top:442px;width:41px;height:17px;background:#454545;border-right:1px solid #2e2e2e;border-bottom:1px solid #2e2e2e"></div>
<span class="t" style="left:1224.0px;top:445.4px;font-size:10.8px;line-height:1;letter-spacing:-1.10px;color:#a2a2a2;font-weight:bold;">Paths</span>
<svg style="left:1347px;top:447px" width="15" height="7"><path d="M0 1.500H5.500L2.750 4.500Z" fill="#e0e0e0"/><path d="M6.500 .5H14.500M6.500 2.500H14.500M6.500 4.500H14.500M6.500 6.500H14.500" stroke="#e0e0e0" stroke-width="1"/></svg>
<div class="a" style="left:1117px;top:460px;width:249px;height:84px;background:#535353;"></div>
<div class="a" style="left:1121px;top:463px;width:70px;height:20px;border:1px solid #2c2c2c;border-radius:3px;background:linear-gradient(#6c6c6c,#4d4d4d);box-shadow:0 1px 0 #636363"></div><svg style="left:1181px;top:468px" width="6" height="10"><path d="M0 3.500L3 0L6 3.500ZM0 6.500L3 10L6 6.500Z" fill="#ededed"/></svg>
<svg style="left:1128px;top:467px" width="10" height="11"><circle cx="5.500" cy="4" r="3.200" fill="none" stroke="#d8d8d8" stroke-width="1.300"/><path d="M3.500 6.500L.8 9.800" stroke="#d8d8d8" stroke-width="1.800"/></svg>
<span class="t" style="left:1143.0px;top:468.5px;font-size:10px;line-height:1;letter-spacing:-0.34px;color:#f4f4f4;">Kind</span>
<svg style="left:1202px;top:467px" width="15" height="12"><rect x=".5" y=".5" width="13" height="10" fill="none" stroke="#c4c4c4"/><path d="M2 9L5.500 5L8 8L9.500 6.500L12 9Z" fill="#c4c4c4"/><circle cx="10" cy="3.500" r="1.200" fill="#c4c4c4"/></svg>
<svg style="left:1227px;top:467px" width="12" height="12"><circle cx="6" cy="6" r="5" fill="#6a6a6a" stroke="#c4c4c4" stroke-width="1"/><path d="M2.500 9.500A5 5 0 0 1 9.500 2.500Z" fill="#c4c4c4"/></svg>
<span class="t" style="left:1251.500px;top:465px;font-family:'Liberation Serif',serif;font-size:16.500px;line-height:16.500px;font-weight:bold;color:#c6c6c6">T</span>
<svg style="left:1276px;top:467px" width="12" height="12"><rect x="1.500" y="1.500" width="8.500" height="8.500" fill="none" stroke="#c4c4c4" stroke-width="1.100"/><g fill="#555" stroke="#c4c4c4" stroke-width=".8"><rect x=".5" y=".5" width="2.200" height="2.200"/><rect x="8.800" y=".5" width="2.200" height="2.200"/><rect x=".5" y="8.800" width="2.200" height="2.200"/><rect x="8.800" y="8.800" width="2.200" height="2.200"/></g></svg>
<svg style="left:1299px;top:466px" width="13" height="13"><path d="M4.500 .5H9L11.500 3V9.500H4.500Z" fill="#5a5a5a" stroke="#c4c4c4" stroke-width="1"/><path d="M9 .5V3H11.500" fill="none" stroke="#c4c4c4" stroke-width="1"/><rect x="0" y="6" width="6.500" height="6.500" fill="#b0b0b0"/></svg>
<div class="a" style="left:1325px;top:464px;width:9px;height:17px;background:#3c3c3c;border:1px solid #2e2e2e;border-radius:1px"></div>
<div class="a" style="left:1326px;top:465px;width:7px;height:7px;background:linear-gradient(#9a9a9a,#777);"></div>
<div class="a" style="left:1117px;top:486px;width:249px;height:1px;background:#3e3e3e;"></div><div class="a" style="left:1117px;top:487px;width:249px;height:1px;background:#5c5c5c;"></div>
<div class="a" style="left:1121px;top:491px;width:111px;height:20px;border:1px solid #2c2c2c;border-radius:3px;background:linear-gradient(#6c6c6c,#4d4d4d);box-shadow:0 1px 0 #636363"></div><svg style="left:1222px;top:496px" width="6" height="10"><path d="M0 3.500L3 0L6 3.500ZM0 6.500L3 10L6 6.500Z" fill="#ededed"/></svg>
<span class="t" style="left:1129.0px;top:496.0px;font-size:10px;line-height:1;letter-spacing:-0.15px;color:#f4f4f4;">Normal</span>
<span class="t" style="left:1239.0px;top:494.5px;font-size:10px;line-height:1;letter-spacing:-0.10px;color:#f4f4f4;">Opacity:</span>
<div class="a" style="left:1281px;top:492px;width:54px;height:18px;background:#383838;border:1px solid #2c2c2c;border-radius:2px;box-shadow:0 1px 0 #626262"></div><div class="a" style="left:1315px;top:493px;width:19px;height:16px;background:linear-gradient(#6e6e6e,#505050);border-left:1px solid #2c2c2c;border-radius:0 2px 2px 0"></div><svg style="left:1322px;top:500px" width="6" height="4"><path d="M0 0H6L3 3.500Z" fill="#ededed"/></svg>
<span class="t" style="left:1286.0px;top:496.0px;font-size:10px;line-height:1;letter-spacing:-0.36px;color:#f4f4f4;">100%</span>
<div class="a" style="left:1117px;top:514px;width:249px;height:1px;background:#3e3e3e;"></div><div class="a" style="left:1117px;top:515px;width:249px;height:1px;background:#5c5c5c;"></div>
<span class="t" style="left:1123.0px;top:524.0px;font-size:10px;line-height:1;letter-spacing:-0.23px;color:#f4f4f4;">Lock:</span>
<svg style="left:1156px;top:524px" width="12" height="12"><rect x="0" y="0" width="11.500" height="11.500" fill="#777"/><rect x="0.5" y="0.5" width="3.500" height="3.500" fill="#8c8c8c"/><rect x="4.0" y="0.5" width="3.500" height="3.500" fill="#6a6a6a"/><rect x="7.5" y="0.5" width="3.500" height="3.500" fill="#8c8c8c"/><rect x="0.5" y="4.0" width="3.500" height="3.500" fill="#6a6a6a"/><rect x="4.0" y="4.0" width="3.500" height="3.500" fill="#8c8c8c"/><rect x="7.5" y="4.0" width="3.500" height="3.500" fill="#6a6a6a"/><rect x="0.5" y="7.5" width="3.500" height="3.500" fill="#8c8c8c"/><rect x="4.0" y="7.5" width="3.500" height="3.500" fill="#6a6a6a"/><rect x="7.5" y="7.5" width="3.500" height="3.500" fill="#8c8c8c"/></svg>
<svg style="left:1176px;top:521px" width="17" height="15"><path d="M16 .5L8.500 9" stroke="#9a9a9a" stroke-width="1.600" stroke-linecap="round"/><path d="M7 7.800C5 8.500 5 11.500 .5 12.800C3.500 14.500 8.500 14 9.800 10.300Z" fill="#9a9a9a"/></svg>
<svg style="left:1199px;top:522px" width="14" height="14"><path d="M6.500 1.500V11.500M1.500 6.500H11.500" stroke="#d6d6d6" stroke-width="1.100"/><path d="M6.500 0L8.800 2.800H4.200ZM6.500 13L8.800 10.200H4.200ZM0 6.500L2.800 4.200V8.800ZM13 6.500L10.200 4.200V8.800Z" fill="#d6d6d6"/></svg>
<svg style="left:1223px;top:522.5px" width="11" height="13"><path d="M2.500 6V3.800a2.800 2.800 0 0 1 5.600 0V6" fill="none" stroke="#cdcdcd" stroke-width="1.500"/><rect x=".5" y="5.500" width="9.600" height="7" rx=".8" fill="#cdcdcd"/><rect x="4.500" y="8" width="1.600" height="2.500" fill="#4a4a4a"/></svg>
<span class="t" style="left:1261.5px;top:522.5px;font-size:10px;line-height:1;letter-spacing:-0.51px;color:#f4f4f4;">Fill:</span>
<div class="a" style="left:1281px;top:520px;width:54px;height:18px;background:#383838;border:1px solid #2c2c2c;border-radius:2px;box-shadow:0 1px 0 #626262"></div><div class="a" style="left:1315px;top:521px;width:19px;height:16px;background:linear-gradient(#6e6e6e,#505050);border-left:1px solid #2c2c2c;border-radius:0 2px 2px 0"></div><svg style="left:1322px;top:528px" width="6" height="4"><path d="M0 0H6L3 3.500Z" fill="#ededed"/></svg>
<span class="t" style="left:1286.0px;top:524.0px;font-size:10px;line-height:1;letter-spacing:-0.36px;color:#f4f4f4;">100%</span>
<div class="a" style="left:1117px;top:543px;width:249px;height:1px;background:#2e2e2e;"></div>
<div class="a" style="left:1117px;top:544px;width:249px;height:163px;background:#535353;"></div>
<div class="a" style="left:1350px;top:544px;width:16px;height:163px;background:#474747;border-left:1px solid #3a3a3a"></div>
<div class="a" style="left:1148px;top:584px;width:202px;height:77px;background:#596679;"></div>
<div class="a" style="left:1117px;top:583px;width:233px;height:1px;background:#353535;"></div>
<div class="a" style="left:1117px;top:622px;width:233px;height:1px;background:#353535;"></div>
<div class="a" style="left:1117px;top:661px;width:233px;height:1px;background:#353535;"></div>
<div class="a" style="left:1147px;top:544px;width:1px;height:157px;background:#353535;"></div>
<svg style="left:1126px;top:559px" width="13" height="10"><path d="M.7 4.600C3.200 .3 9.800 .3 12.300 4.600C9.800 8.700 3.200 8.700 .7 4.600Z" fill="#8a8a8a" stroke="#c2c2c2" stroke-width="1.400"/><circle cx="6.600" cy="4.300" r="2.700" fill="#3a3a3a"/><circle cx="7.400" cy="3.300" r=".9" fill="#d0d0d0"/></svg>
<svg style="left:1126px;top:598px" width="13" height="10"><path d="M.7 4.600C3.200 .3 9.800 .3 12.300 4.600C9.800 8.700 3.200 8.700 .7 4.600Z" fill="#8a8a8a" stroke="#c2c2c2" stroke-width="1.400"/><circle cx="6.600" cy="4.300" r="2.700" fill="#3a3a3a"/><circle cx="7.400" cy="3.300" r=".9" fill="#d0d0d0"/></svg>
<svg style="left:1126px;top:637px" width="13" height="10"><path d="M.7 4.600C3.200 .3 9.800 .3 12.300 4.600C9.800 8.700 3.200 8.700 .7 4.600Z" fill="#8a8a8a" stroke="#c2c2c2" stroke-width="1.400"/><circle cx="6.600" cy="4.300" r="2.700" fill="#3a3a3a"/><circle cx="7.400" cy="3.300" r=".9" fill="#d0d0d0"/></svg>
<svg style="left:1126px;top:676px" width="13" height="10"><path d="M.7 4.600C3.200 .3 9.800 .3 12.300 4.600C9.800 8.700 3.200 8.700 .7 4.600Z" fill="#8a8a8a" stroke="#c2c2c2" stroke-width="1.400"/><circle cx="6.600" cy="4.300" r="2.700" fill="#3a3a3a"/><circle cx="7.400" cy="3.300" r=".9" fill="#d0d0d0"/></svg>
<svg style="left:1151px;top:548px" width="31" height="32"><rect x=".5" y=".5" width="29.500" height="30.500" fill="#fb0007" stroke="#111"/><rect x="3.6" y="1" width=".7" height="29" fill="#fff" opacity=".85"/><rect x="5.1" y="1" width=".7" height="29" fill="#fff" opacity=".85"/><rect x="7.6" y="1" width=".7" height="29" fill="#fff" opacity=".85"/><rect x="10.1" y="1" width=".7" height="29" fill="#fff" opacity=".85"/><rect x="12" y="1" width=".7" height="29" fill="#fff" opacity=".85"/><rect x="13.8" y="1" width=".7" height="29" fill="#fff" opacity=".85"/><rect x="16.6" y="1" width=".7" height="29" fill="#fff" opacity=".85"/><rect x="17.7" y="1" width=".7" height="29" fill="#fff" opacity=".85"/><rect x="21.7" y="1" width=".7" height="29" fill="#fff" opacity=".85"/><rect x="24.2" y="1" width=".7" height="29" fill="#fff" opacity=".85"/><rect x="28" y="1" width=".7" height="29" fill="#fff" opacity=".85"/><rect x="16.500" y="18.500" width="15" height="14" fill="#535353"/><path d="M16.500 31.500V18.500H30.500" fill="none" stroke="#111" stroke-width="1"/></svg>
<svg style="left:1169px;top:568px" width="12" height="12"><rect x="1.500" y="1.500" width="8.500" height="8.500" fill="none" stroke="#d0d0d0" stroke-width="1.100"/><g fill="#555" stroke="#d0d0d0" stroke-width=".8"><rect x=".5" y=".5" width="2.200" height="2.200"/><rect x="8.800" y=".5" width="2.200" height="2.200"/><rect x=".5" y="8.800" width="2.200" height="2.200"/><rect x="8.800" y="8.800" width="2.200" height="2.200"/></g></svg>
<span class="t" style="left:1191.5px;top:561.0px;font-size:10px;line-height:1;letter-spacing:-0.36px;color:#f4f4f4;">12 Col Grid</span>
<svg style="left:1323px;top:557.5px" width="11" height="13"><path d="M2.500 6V3.800a2.800 2.800 0 0 1 5.600 0V6" fill="none" stroke="#cdcdcd" stroke-width="1.500"/><rect x=".5" y="5.500" width="9.600" height="7" rx=".8" fill="#cdcdcd"/><rect x="4.500" y="8" width="1.600" height="2.500" fill="#4a4a4a"/></svg>
<span class="t" style="left:1158.300px;top:591.200px;font-family:'Liberation Serif',serif;font-size:22.500px;line-height:22.500px;font-weight:bold;color:#c6cad1;transform:scaleX(1.050);transform-origin:0 0">T</span>
<span class="t" style="left:1193.0px;top:600.0px;font-size:10px;line-height:1;letter-spacing:-0.07px;color:#f4f4f4;white-space:pre;">Home  Services  Portofolio  T...</span>
<svg style="left:1151px;top:634px" width="17" height="16"><path d="M1 15.500V1H16" fill="none" stroke="#1a1a1a" stroke-width="2"/><path d="M2.500 15.500V2.500H16" fill="none" stroke="#e8e8e8" stroke-width="1"/></svg>
<svg style="left:1154.5px;top:637.5px" width="12" height="12"><rect x="1.500" y="1.500" width="8.500" height="8.500" fill="none" stroke="#d4d4d4" stroke-width="1.100"/><g fill="#555" stroke="#d4d4d4" stroke-width=".8"><rect x=".5" y=".5" width="2.200" height="2.200"/><rect x="8.800" y=".5" width="2.200" height="2.200"/><rect x=".5" y="8.800" width="2.200" height="2.200"/><rect x="8.800" y="8.800" width="2.200" height="2.200"/></g></svg>
<span class="t" style="left:1177.5px;top:639.0px;font-size:10px;line-height:1;letter-spacing:-0.29px;color:#f4f4f4;">Rectangle 1</span>
<svg style="left:1151px;top:665px" width="32" height="32"><rect x=".5" y=".5" width="30.500" height="30.500" fill="#fff" stroke="#222"/><rect x="1" y="22.500" width="29.500" height="8" fill="#ececec"/><path d="M1 22.500H30.500" stroke="#8a8a8a" stroke-width="1"/><path d="M4 25.500H27" stroke="#111" stroke-width="1"/><path d="M15.500 29.500L17.500 26.500L19.500 29.500Z" fill="#111"/></svg>
<span class="t" style="left:1193.5px;top:678.0px;font-size:10px;line-height:1;letter-spacing:-0.04px;color:#f4f4f4;">Background</span>
<svg style="left:1323px;top:675px" width="11" height="13"><path d="M2.500 6V3.800a2.800 2.800 0 0 1 5.600 0V6" fill="none" stroke="#cdcdcd" stroke-width="1.500"/><rect x=".5" y="5.500" width="9.600" height="7" rx=".8" fill="#cdcdcd"/><rect x="4.500" y="8" width="1.600" height="2.500" fill="#4a4a4a"/></svg>
<div class="a" style="left:1116px;top:581px;width:232px;height:82px;border:3px solid #ed1c24"></div>
<div class="a" style="left:1117px;top:701px;width:249px;height:1px;background:#3a3a3a;"></div>
<div class="a" style="left:1117px;top:702px;width:249px;height:5px;background:#4a4a4a;"></div>
<div class="a" style="left:1117px;top:706px;width:249px;height:3px;background:#2e2e2e;"></div>
<div class="a" style="left:1117px;top:709px;width:249px;height:19px;background:#535353;box-shadow:inset 0 1px 0 #686868"></div>
<svg style="left:1162px;top:714px" width="15" height="9"><path d="M6 .9H4.200a3.300 3.300 0 0 0 0 6.600H6M8.500 .9H10.300a3.300 3.300 0 0 1 0 6.600H8.500" fill="none" stroke="#cfcfcf" stroke-width="1.700"/><path d="M4.300 4.200H10.200" stroke="#cfcfcf" stroke-width="1.700"/></svg>
<span class="t" style="left:1191.0px;top:712.1px;font-size:13.5px;line-height:1;letter-spacing:0.50px;color:#868686;font-style:italic;font-family:'Liberation Serif',serif;">fx</span>
<svg style="left:1204px;top:722px" width="4" height="3"><path d="M0 0H4L2 2.500Z" fill="#868686"/></svg>
<svg style="left:1217px;top:713px" width="14" height="12"><rect x="0" y="0" width="13.500" height="11.500" fill="#868686"/><circle cx="6.800" cy="5.800" r="3" fill="#5a5a5a"/></svg>
<svg style="left:1244px;top:713px" width="18" height="13"><circle cx="6" cy="6" r="5.200" fill="#6a6a6a" stroke="#cfcfcf" stroke-width="1.300"/><path d="M2.300 9.700A5.200 5.200 0 0 1 9.700 2.300Z" fill="#cfcfcf"/><path d="M13 10H17L15 12.500Z" fill="#cfcfcf"/></svg>
<svg style="left:1270px;top:713px" width="14" height="12"><path d="M0 1.500C0 .5 .5 0 1.500 0H5L6.500 2H12C13 2 13.500 2.500 13.500 3.500V11.500H0Z" fill="url(#gv)"/></svg>
<svg style="left:1298px;top:713px" width="12" height="12"><path d="M.5 0H11.500V11.500H5.500V6H.5Z" fill="#cfcfcf"/><path d="M1 7.500L4.500 11.500H1Z" fill="#cfcfcf"/></svg>
<svg style="left:1324px;top:712px" width="12" height="14"><path d="M4 1.500C4 -.5 8 -.5 8 1.500" fill="none" stroke="#cfcfcf" stroke-width="1.200"/><rect x="0" y="2" width="12" height="2" rx=".8" fill="#cfcfcf"/><path d="M1.500 5H10.500L9.800 13H2.200Z" fill="none" stroke="#cfcfcf" stroke-width="1.200"/><path d="M4.500 6V12M6 6V12M7.500 6V12" stroke="#cfcfcf" stroke-width=".9"/></svg>
</body></html>
